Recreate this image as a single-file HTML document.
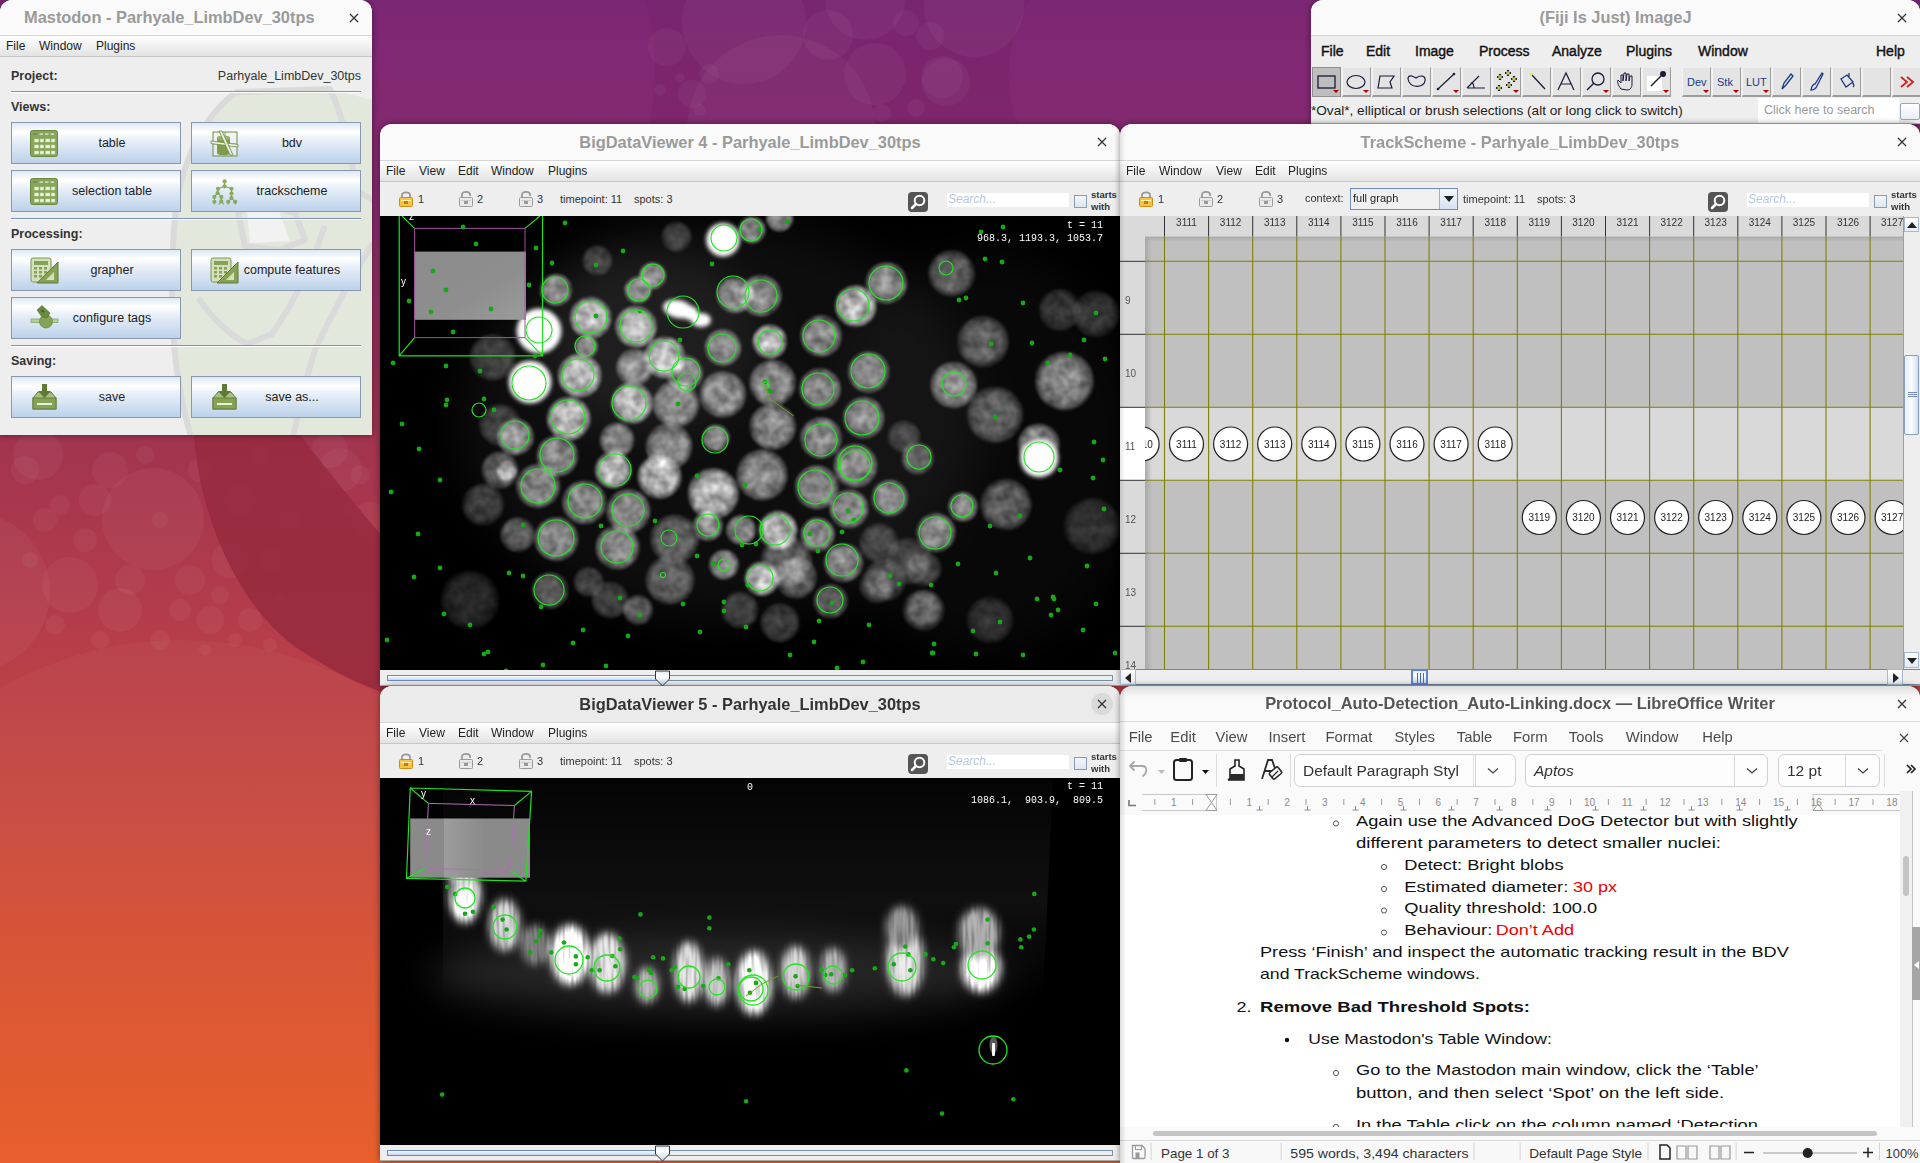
<!DOCTYPE html>
<html><head><meta charset="utf-8">
<style>
*{margin:0;padding:0;box-sizing:border-box}
html,body{width:1920px;height:1163px;overflow:hidden}
body{position:relative;font-family:"Liberation Sans",sans-serif;background:linear-gradient(180deg,#7c2774 0%,#872a6e 16%,#a2344f 38%,#b53d4a 54%,#c64840 68%,#d9522f 84%,#e75a26 100%)}
.abs{position:absolute}
.win{position:absolute;overflow:hidden;border-radius:12px 12px 0 0;background:#eeeeee;box-shadow:0 0 6px rgba(0,0,0,.45)}
.tb{position:absolute;left:0;right:0;top:0;background:#fafafa;border-bottom:1px solid #d6d6d6}
.tt{position:absolute;left:0;right:0;text-align:center;font-weight:bold;color:#9a9a9a;font-size:17px;white-space:nowrap}
.cls{position:absolute;font-size:17px;color:#333;width:24px;height:24px;line-height:24px;text-align:center}
.mb{position:absolute;left:0;right:0;background:linear-gradient(#ffffff,#e3e3e3);border-bottom:1px solid #c6c6c6;font-size:12px;color:#222}
.mb span{position:absolute;top:0}
.t{position:absolute;white-space:nowrap}
.btn{position:absolute;width:170px;height:42px;border:1px solid #8898b0;background:linear-gradient(#dde8f4 0%,#ffffff 22%,#e6eef8 45%,#bcd2ea 100%);font-size:12.5px;color:#222}
.btn .l{position:absolute;left:32px;right:0;top:13px;text-align:center}
.sep{position:absolute;left:11px;width:350px;height:2px;background:#7b8fcc;border-bottom:1px solid #fff}
.blbl{position:absolute;left:11px;font-weight:bold;font-size:12.5px;color:#333}
</style></head><body>

<!-- desktop decorations -->
<svg class="abs" style="left:0;top:0" width="1920" height="1163">
  <path d="M644,0 C660,40 655,90 650,123 L1018,123 C1000,80 1010,30 1030,0 Z" fill="#5a1050" fill-opacity="0.10"/>
  <g fill="#ffffff" fill-opacity="0.04">
    <circle cx="744" cy="22" r="62"/><circle cx="781" cy="129" r="94"/><circle cx="828" cy="35" r="25"/><circle cx="875" cy="74" r="31"/>
    <circle cx="946" cy="82" r="24"/><circle cx="865" cy="0" r="40"/><circle cx="974" cy="7" r="50"/><circle cx="667" cy="47" r="19"/><circle cx="692" cy="94" r="14"/><circle cx="709" cy="74" r="10"/><circle cx="906" cy="23" r="13"/><circle cx="930" cy="36" r="14"/><circle cx="942" cy="77" r="21"/><circle cx="916" cy="108" r="9"/><circle cx="882" cy="113" r="9"/><circle cx="660" cy="90" r="6"/><circle cx="680" cy="78" r="5"/><circle cx="700" cy="110" r="6"/>
  </g>
    <g fill="#ffffff" fill-opacity="0.045">
    <circle cx="-30" cy="592" r="80"/><circle cx="153" cy="519" r="51"/><circle cx="38" cy="455" r="25"/><circle cx="95" cy="500" r="16"/>
    <circle cx="70" cy="585" r="28"/><circle cx="120" cy="610" r="22"/><circle cx="190" cy="580" r="15"/><circle cx="230" cy="560" r="18"/>
    <circle cx="45" cy="520" r="12"/><circle cx="210" cy="620" r="14"/><circle cx="160" cy="640" r="10"/><circle cx="340" cy="470" r="22"/><circle cx="370" cy="520" r="18"/><circle cx="25" cy="470" r="14"/><circle cx="60" cy="505" r="10"/><circle cx="110" cy="470" r="18"/><circle cx="145" cy="455" r="9"/><circle cx="200" cy="470" r="12"/><circle cx="240" cy="500" r="16"/><circle cx="260" cy="455" r="10"/><circle cx="85" cy="540" r="12"/><circle cx="130" cy="580" r="15"/><circle cx="180" cy="610" r="11"/><circle cx="220" cy="595" r="9"/><circle cx="250" cy="620" r="12"/><circle cx="280" cy="600" r="8"/><circle cx="100" cy="640" r="9"/><circle cx="55" cy="625" r="10"/><circle cx="30" cy="560" r="8"/><circle cx="160" cy="520" r="8"/><circle cx="290" cy="520" r="10"/><circle cx="270" cy="560" r="12"/><circle cx="235" cy="640" r="7"/><circle cx="205" cy="650" r="6"/><circle cx="270" cy="645" r="7"/><circle cx="330" cy="450" r="18"/><circle cx="360" cy="475" r="10"/><circle cx="350" cy="510" r="8"/>
  </g>
  <path d="M194,435 C200,520 240,610 300,650 C330,670 360,685 390,695 L390,545 C350,500 320,460 300,435 Z" fill="#962a3e" fill-opacity="0.85"/>
  <path d="M0,688 C60,655 120,640 179,640 C260,640 330,665 390,701 L390,1163 L0,1163 Z" fill="#ffffff" fill-opacity="0.03"/>
</svg>

<!-- ===== Mastodon window ===== -->
<div class="win" id="mast" style="left:0;top:0;width:372px;height:435px;">
  <div class="tb" style="height:36px"><div class="tt" style="top:8px;left:24px;right:auto;font-size:16.4px">Mastodon - Parhyale_LimbDev_30tps</div><svg class="abs" style="left:349px;top:13px" width="10" height="10"><path d="M1,1 L9,9 M9,1 L1,9" stroke="#333" stroke-width="1.3"/></svg></div>
  <div class="mb" style="top:36px;height:21px"><span style="left:6px;top:3px">File</span><span style="left:39px;top:3px">Window</span><span style="left:96px;top:3px">Plugins</span></div>
  <svg class="abs" style="left:0;top:57px" width="372" height="378" viewBox="0 57 372 378">
    <path d="M237,92 L330,89 L372,100 L372,435 L192,435 C178,380 168,300 176,205 C185,150 210,110 237,92 Z" fill="#e3e8dc"/>
    <path d="M247,211 L279,211 L290,241 L250,243 Z" fill="#f2f2f2"/>
    <g fill="none" stroke="#dadada" stroke-width="6" stroke-linejoin="round" stroke-linecap="round">
      <path d="M237,92 C210,110 185,150 176,205 C168,290 170,370 192,440"/>
      <path d="M237,92 L330,89 C345,120 352,160 356,190 L372,200"/>
      <path d="M238,212 L262,203 L295,213 L305,240 L280,250 L245,246 Z"/>
      <path d="M324,228 C310,270 295,300 272,334 L247,344"/>
      <path d="M372,245 C350,280 330,318 315,350 C305,380 300,410 292,440"/>
      <path d="M200,300 C220,330 240,340 247,344"/>
    </g>
  </svg>
  <div class="blbl" style="top:69px">Project:</div>
  <div class="t" style="right:11px;top:69px;font-size:12.5px;color:#333">Parhyale_LimbDev_30tps</div>
  <div class="sep" style="top:91px"></div>
  <div class="blbl" style="top:100px">Views:</div>
  <div class="btn" style="left:11px;top:122px"><svg class="abs" style="left:18px;top:6px" width="30" height="29"><rect x="0.5" y="1.5" width="27" height="26" rx="2" fill="#86a45a" stroke="#6a8840"/><rect x="3" y="4" width="4" height="2" fill="#74914a"/><rect x="9.5" y="4.5" width="3.4" height="1.3" fill="#e4ecd4"/><rect x="15.1" y="4.5" width="3.4" height="1.3" fill="#e4ecd4"/><rect x="20.7" y="4.5" width="3.4" height="1.3" fill="#e4ecd4"/><rect x="4.5" y="10" width="4.2" height="3" fill="#eef4e0" stroke="#c8d8b0" stroke-width="0.5"/><rect x="10.1" y="10" width="3.6" height="3" fill="#eef4e0" stroke="#c8d8b0" stroke-width="0.5"/><rect x="15.7" y="10" width="4.2" height="3" fill="#eef4e0" stroke="#c8d8b0" stroke-width="0.5"/><rect x="21.3" y="10" width="3.6" height="3" fill="#eef4e0" stroke="#c8d8b0" stroke-width="0.5"/><rect x="4.5" y="16" width="4.2" height="3" fill="#eef4e0" stroke="#c8d8b0" stroke-width="0.5"/><rect x="10.1" y="16" width="3.6" height="3" fill="#eef4e0" stroke="#c8d8b0" stroke-width="0.5"/><rect x="15.7" y="16" width="4.2" height="3" fill="#eef4e0" stroke="#c8d8b0" stroke-width="0.5"/><rect x="21.3" y="16" width="3.6" height="3" fill="#eef4e0" stroke="#c8d8b0" stroke-width="0.5"/><rect x="4.5" y="22" width="4.2" height="3" fill="#eef4e0" stroke="#c8d8b0" stroke-width="0.5"/><rect x="10.1" y="22" width="3.6" height="3" fill="#eef4e0" stroke="#c8d8b0" stroke-width="0.5"/><rect x="15.7" y="22" width="4.2" height="3" fill="#eef4e0" stroke="#c8d8b0" stroke-width="0.5"/><rect x="21.3" y="22" width="3.6" height="3" fill="#eef4e0" stroke="#c8d8b0" stroke-width="0.5"/></svg><div class="l">table</div></div>
  <div class="btn" style="left:191px;top:122px"><svg class="abs" style="left:18px;top:6px" width="30" height="29"><rect x="3" y="3" width="24" height="24" fill="#f0f0ec" fill-opacity="0.6" stroke="#6f8c42" stroke-width="1"/><path d="M3,15 H27 M15,3 V27" stroke="#8aa660" stroke-width="1"/><path d="M7,9 C7,6 20,6 20,9 L20,24 C20,27 7,27 7,24 Z" fill="#7d9c4e"/><ellipse cx="13.5" cy="9" rx="6.5" ry="2.5" fill="#98b46a"/><path d="M1,12 L28,15.5 L28,18 L1,14.5 Z" fill="#f4f8ec" stroke="#6f8c42" stroke-width="0.8"/><path d="M9,2 L12,2 L23,26 L20,26 Z" fill="#e8f0dc" stroke="#6f8c42" stroke-width="0.8"/></svg><div class="l">bdv</div></div>
  <div class="btn" style="left:11px;top:170px"><svg class="abs" style="left:18px;top:6px" width="30" height="29"><rect x="0.5" y="1.5" width="27" height="26" rx="2" fill="#86a45a" stroke="#6a8840"/><rect x="3" y="4" width="4" height="2" fill="#74914a"/><rect x="9.5" y="4.5" width="3.4" height="1.3" fill="#e4ecd4"/><rect x="15.1" y="4.5" width="3.4" height="1.3" fill="#e4ecd4"/><rect x="20.7" y="4.5" width="3.4" height="1.3" fill="#e4ecd4"/><rect x="4.5" y="10" width="4.2" height="3" fill="#eef4e0" stroke="#c8d8b0" stroke-width="0.5"/><rect x="10.1" y="10" width="3.6" height="3" fill="#eef4e0" stroke="#c8d8b0" stroke-width="0.5"/><rect x="15.7" y="10" width="4.2" height="3" fill="#eef4e0" stroke="#c8d8b0" stroke-width="0.5"/><rect x="21.3" y="10" width="3.6" height="3" fill="#eef4e0" stroke="#c8d8b0" stroke-width="0.5"/><rect x="4.5" y="16" width="4.2" height="3" fill="#eef4e0" stroke="#c8d8b0" stroke-width="0.5"/><rect x="10.1" y="16" width="3.6" height="3" fill="#eef4e0" stroke="#c8d8b0" stroke-width="0.5"/><rect x="15.7" y="16" width="4.2" height="3" fill="#eef4e0" stroke="#c8d8b0" stroke-width="0.5"/><rect x="21.3" y="16" width="3.6" height="3" fill="#eef4e0" stroke="#c8d8b0" stroke-width="0.5"/><rect x="4.5" y="22" width="4.2" height="3" fill="#eef4e0" stroke="#c8d8b0" stroke-width="0.5"/><rect x="10.1" y="22" width="3.6" height="3" fill="#eef4e0" stroke="#c8d8b0" stroke-width="0.5"/><rect x="15.7" y="22" width="4.2" height="3" fill="#eef4e0" stroke="#c8d8b0" stroke-width="0.5"/><rect x="21.3" y="22" width="3.6" height="3" fill="#eef4e0" stroke="#c8d8b0" stroke-width="0.5"/></svg><div class="l">selection table</div></div>
  <div class="btn" style="left:191px;top:170px"><svg class="abs" style="left:18px;top:6px" width="30" height="29"><g stroke="#88a65a" stroke-width="1.1"><line x1="14.6" y1="4.4" x2="14.6" y2="9.3"/><line x1="14.6" y1="9.3" x2="8" y2="11.8"/><line x1="14.6" y1="9.3" x2="21.5" y2="11.8"/><line x1="8" y1="11.8" x2="7.6" y2="16.2"/><line x1="21.5" y1="11.8" x2="21.5" y2="16.6"/><line x1="7.6" y1="16.2" x2="4.4" y2="19.9"/><line x1="7.6" y1="16.2" x2="11.3" y2="19.9"/><line x1="21.5" y1="16.6" x2="21.5" y2="21.1"/><line x1="4.4" y1="19.9" x2="4.4" y2="24.8"/><line x1="11.3" y1="19.9" x2="11.3" y2="24.4"/><line x1="21.5" y1="21.1" x2="18.2" y2="24.8"/><line x1="21.5" y1="21.1" x2="25.2" y2="24.8"/><path d="M4.4,24.8 L4.4,27.5 M11.3,24.4 L8.5,27.5 M11.3,24.4 L14,27.5 M18.2,24.8 L18.2,27.5 M25.2,24.8 L25.2,27.5"/></g><g fill="#8aaa5c"><circle cx="14.6" cy="4.4" r="2.1"/><circle cx="14.6" cy="9.3" r="2.1"/><circle cx="8" cy="11.8" r="2.1"/><circle cx="21.5" cy="11.8" r="2.1"/><circle cx="7.6" cy="16.2" r="2.1"/><circle cx="21.5" cy="16.6" r="2.1"/><circle cx="4.4" cy="19.9" r="2.1"/><circle cx="11.3" cy="19.9" r="2.1"/><circle cx="21.5" cy="21.1" r="2.1"/><circle cx="4.4" cy="24.8" r="2.1"/><circle cx="11.3" cy="24.4" r="2.1"/><circle cx="18.2" cy="24.8" r="2.1"/><circle cx="25.2" cy="24.8" r="2.1"/></g></svg><div class="l">trackscheme</div></div>
  <div class="sep" style="top:218px"></div>
  <div class="blbl" style="top:227px">Processing:</div>
  <div class="btn" style="left:11px;top:249px"><svg class="abs" style="left:18px;top:6px" width="30" height="29"><rect x="1" y="2" width="20" height="24" rx="2" fill="#d4e0bc" stroke="#7a964e"/><rect x="4" y="5" width="14" height="4" fill="#86a256"/><g fill="#86a256"><rect x="4" y="11" width="3" height="2.5"/><rect x="9" y="11" width="3" height="2.5"/><rect x="14" y="11" width="3" height="2.5"/><rect x="4" y="15" width="3" height="2.5"/><rect x="9" y="15" width="3" height="2.5"/><rect x="14" y="15" width="3" height="2.5"/><rect x="4" y="19" width="3" height="2.5"/><rect x="9" y="19" width="3" height="2.5"/><rect x="14" y="19" width="3" height="2.5"/></g><path d="M28,6 L28,27 L7,27 Z" fill="#86a256" stroke="#5e7a36"/><path d="M24,16 L24,24 L16,24 Z" fill="#d4e0bc"/></svg><div class="l">grapher</div></div>
  <div class="btn" style="left:191px;top:249px"><svg class="abs" style="left:18px;top:6px" width="30" height="29"><rect x="1" y="2" width="20" height="24" rx="2" fill="#d4e0bc" stroke="#7a964e"/><rect x="4" y="5" width="14" height="4" fill="#86a256"/><g fill="#86a256"><rect x="4" y="11" width="3" height="2.5"/><rect x="9" y="11" width="3" height="2.5"/><rect x="14" y="11" width="3" height="2.5"/><rect x="4" y="15" width="3" height="2.5"/><rect x="9" y="15" width="3" height="2.5"/><rect x="14" y="15" width="3" height="2.5"/><rect x="4" y="19" width="3" height="2.5"/><rect x="9" y="19" width="3" height="2.5"/><rect x="14" y="19" width="3" height="2.5"/></g><path d="M28,6 L28,27 L7,27 Z" fill="#86a256" stroke="#5e7a36"/><path d="M24,16 L24,24 L16,24 Z" fill="#d4e0bc"/></svg><div class="l">compute features</div></div>
  <div class="btn" style="left:11px;top:297px"><svg class="abs" style="left:18px;top:6px" width="30" height="29"><rect x="1" y="15" width="27" height="3.5" fill="#b8cc98" stroke="#88a468" stroke-width="0.8"/><circle cx="16" cy="17.5" r="6.5" fill="#86a256" stroke="#6a8840" stroke-width="0.8"/><path d="M7,6 L12,1.5 L20,9 L17,14 L12,13 Z" fill="#6a8a3e" stroke="#56722e" stroke-width="0.6"/><rect x="11" y="6" width="3.5" height="2" transform="rotate(40 12.7 7)" fill="#4a6428"/></svg><div class="l">configure tags</div></div>
  <div class="sep" style="top:345px"></div>
  <div class="blbl" style="top:354px">Saving:</div>
  <div class="btn" style="left:11px;top:376px"><svg class="abs" style="left:18px;top:6px" width="30" height="29"><path d="M3,15 L8,9 L21,9 L26,15 L26,26 L3,26 Z" fill="#a8bf80" stroke="#64803a"/><rect x="3" y="15" width="23" height="11" fill="#86a256" stroke="#64803a"/><rect x="7" y="20" width="15" height="2" fill="#e8f0d8"/><path d="M12,1 L17,1 L17,8 L21,8 L14.5,15 L8,8 L12,8 Z" fill="#5e7a36"/></svg><div class="l">save</div></div>
  <div class="btn" style="left:191px;top:376px"><svg class="abs" style="left:18px;top:6px" width="30" height="29"><path d="M3,15 L8,9 L21,9 L26,15 L26,26 L3,26 Z" fill="#a8bf80" stroke="#64803a"/><rect x="3" y="15" width="23" height="11" fill="#86a256" stroke="#64803a"/><rect x="7" y="20" width="15" height="2" fill="#e8f0d8"/><path d="M12,1 L17,1 L17,8 L21,8 L14.5,15 L8,8 L12,8 Z" fill="#5e7a36"/>AS</svg><div class="l">save as...</div></div>
</div>


<!-- ===== ImageJ window ===== -->
<div class="win" style="left:1311px;top:0;width:609px;height:124px;background:#eeeeee;border-bottom:1px solid #b4b4b4">
  <div class="tb" style="height:36px"><div class="tt" style="top:8px;left:0;font-size:16.4px">(Fiji Is Just) ImageJ</div><svg class="abs" style="left:586px;top:13px" width="10" height="10"><path d="M1,1 L9,9 M9,1 L1,9" stroke="#333" stroke-width="1.3"/></svg></div>
  <div class="abs" style="left:0;top:36px;width:609px;height:29px;background:#eeeeee;font-size:14px;color:#111;-webkit-text-stroke:0.4px #111">
    <span class="t" style="left:10px;top:7px">File</span><span class="t" style="left:55px;top:7px">Edit</span><span class="t" style="left:104px;top:7px">Image</span><span class="t" style="left:168px;top:7px">Process</span><span class="t" style="left:241px;top:7px">Analyze</span><span class="t" style="left:315px;top:7px">Plugins</span><span class="t" style="left:387px;top:7px">Window</span><span class="t" style="left:565px;top:7px">Help</span>
  </div>
  <div class="abs" style="left:1px;top:67px;width:29px;height:30px;background:#bdbdbd;border:1px solid #909090"><svg class="abs" style="left:-1px;top:-1px" width="29" height="30"><rect x="6" y="9" width="17" height="12" fill="none" stroke="#1a1a3a" stroke-width="1.3"/><path d="M21,23 L27,23 L24,26 Z" fill="#b00000"/></svg></div><div class="abs" style="left:31px;top:67px;width:29px;height:30px;background:#e4e4e4;border-top:1px solid #eeeeee;border-left:1px solid #f4f4f4;border-right:1px solid #9c9c9c;border-bottom:2px solid #9c9c9c"><svg class="abs" style="left:-1px;top:-1px" width="29" height="30"><ellipse cx="14" cy="15" rx="9" ry="6.5" fill="none" stroke="#1a1a3a" stroke-width="1.2"/><path d="M21,23 L27,23 L24,26 Z" fill="#b00000"/></svg></div><div class="abs" style="left:61px;top:67px;width:29px;height:30px;background:#e4e4e4;border-top:1px solid #eeeeee;border-left:1px solid #f4f4f4;border-right:1px solid #9c9c9c;border-bottom:2px solid #9c9c9c"><svg class="abs" style="left:-1px;top:-1px" width="29" height="30"><path d="M6,21 L8,9 L22,9 L18,15 L20,21 Z" fill="none" stroke="#1a1a3a" stroke-width="1.2"/></svg></div><div class="abs" style="left:91px;top:67px;width:29px;height:30px;background:#e4e4e4;border-top:1px solid #eeeeee;border-left:1px solid #f4f4f4;border-right:1px solid #9c9c9c;border-bottom:2px solid #9c9c9c"><svg class="abs" style="left:-1px;top:-1px" width="29" height="30"><path d="M6,12 C6,7 11,9 14,11 C18,8 24,8 23,14 C22,21 8,22 6,12 Z" fill="none" stroke="#1a1a3a" stroke-width="1.2"/></svg></div><div class="abs" style="left:121px;top:67px;width:29px;height:30px;background:#e4e4e4;border-top:1px solid #eeeeee;border-left:1px solid #f4f4f4;border-right:1px solid #9c9c9c;border-bottom:2px solid #9c9c9c"><svg class="abs" style="left:-1px;top:-1px" width="29" height="30"><path d="M6,22 L22,7" stroke="#1a1a3a" stroke-width="1.2"/><circle cx="6" cy="22" r="1.3" fill="#1a1a3a"/><circle cx="22" cy="7" r="1.3" fill="#1a1a3a"/><path d="M21,23 L27,23 L24,26 Z" fill="#b00000"/></svg></div><div class="abs" style="left:151px;top:67px;width:29px;height:30px;background:#e4e4e4;border-top:1px solid #eeeeee;border-left:1px solid #f4f4f4;border-right:1px solid #9c9c9c;border-bottom:2px solid #9c9c9c"><svg class="abs" style="left:-1px;top:-1px" width="29" height="30"><path d="M5,21 L23,21 M5,21 L17,9 M12,21 C12,17 10,15 9,16" fill="none" stroke="#1a1a3a" stroke-width="1.2"/></svg></div><div class="abs" style="left:181px;top:67px;width:29px;height:30px;background:#e4e4e4;border-top:1px solid #eeeeee;border-left:1px solid #f4f4f4;border-right:1px solid #9c9c9c;border-bottom:2px solid #9c9c9c"><svg class="abs" style="left:-1px;top:-1px" width="29" height="30"><g stroke="#1a1a3a" stroke-width="2.2"><path d="M5,10 h6 M8,7 v6 M13,6 h6 M16,3 v6 M19,12 h6 M22,9 v6 M4,21 h6 M7,18 v6 M14,18 h6 M17,15 v6"/></g><g stroke="#ffff40" stroke-width="1"><path d="M6,10 h4 M8,8 v4 M14,6 h4 M16,4 v4 M20,12 h4 M22,10 v4 M5,21 h4 M7,19 v4 M15,18 h4 M17,16 v4"/></g><path d="M21,23 L27,23 L24,26 Z" fill="#b00000"/></svg></div><div class="abs" style="left:211px;top:67px;width:29px;height:30px;background:#e4e4e4;border-top:1px solid #eeeeee;border-left:1px solid #f4f4f4;border-right:1px solid #9c9c9c;border-bottom:2px solid #9c9c9c"><svg class="abs" style="left:-1px;top:-1px" width="29" height="30"><path d="M10,8 L23,22" stroke="#1a1a3a" stroke-width="1.3"/><circle cx="9" cy="7" r="1.6" fill="#ee3"/></svg></div><div class="abs" style="left:241px;top:67px;width:29px;height:30px;background:#e4e4e4;border-top:1px solid #eeeeee;border-left:1px solid #f4f4f4;border-right:1px solid #9c9c9c;border-bottom:2px solid #9c9c9c"><svg class="abs" style="left:-1px;top:-1px" width="29" height="30"><path d="M6,23 L14,6 L22,23 M9,17 L19,17" fill="none" stroke="#1a1a3a" stroke-width="1.2"/></svg></div><div class="abs" style="left:271px;top:67px;width:29px;height:30px;background:#e4e4e4;border-top:1px solid #eeeeee;border-left:1px solid #f4f4f4;border-right:1px solid #9c9c9c;border-bottom:2px solid #9c9c9c"><svg class="abs" style="left:-1px;top:-1px" width="29" height="30"><circle cx="16" cy="12" r="6" fill="none" stroke="#1a1a3a" stroke-width="1.3"/><path d="M12,16 L5,23" stroke="#1a1a3a" stroke-width="1.5"/><path d="M21,23 L27,23 L24,26 Z" fill="#b00000"/></svg></div><div class="abs" style="left:301px;top:67px;width:29px;height:30px;background:#e4e4e4;border-top:1px solid #eeeeee;border-left:1px solid #f4f4f4;border-right:1px solid #9c9c9c;border-bottom:2px solid #9c9c9c"><svg class="abs" style="left:-1px;top:-1px" width="29" height="30"><path d="M9,22 C6,18 5,15 6,13 L9,16 L9,8 L11,8 L11,14 L12,6 L14,6 L14,14 L15,7 L17,7 L17,14 L18,9 L20,9 L20,17 C20,21 18,23 15,23 Z" fill="none" stroke="#1a1a3a" stroke-width="1"/></svg></div><div class="abs" style="left:331px;top:67px;width:29px;height:30px;background:#e4e4e4;border-top:1px solid #eeeeee;border-left:1px solid #f4f4f4;border-right:1px solid #9c9c9c;border-bottom:2px solid #9c9c9c"><svg class="abs" style="left:-1px;top:-1px" width="29" height="30"><rect x="5" y="9" width="15" height="15" fill="#fff"/><path d="M9,19 L19,9" stroke="#1a1a3a" stroke-width="1.5"/><circle cx="21" cy="7" r="3" fill="#1a1a3a"/><path d="M21,23 L27,23 L24,26 Z" fill="#b00000"/></svg></div><div class="abs" style="left:371px;top:67px;width:29px;height:30px;background:#e4e4e4;border-top:1px solid #eeeeee;border-left:1px solid #f4f4f4;border-right:1px solid #9c9c9c;border-bottom:2px solid #9c9c9c"><svg class="abs" style="left:-1px;top:-1px" width="29" height="30"><text x="5" y="19" font-size="11" fill="#1a3a8a" font-family="Liberation Sans">Dev</text><path d="M21,23 L27,23 L24,26 Z" fill="#b00000"/></svg></div><div class="abs" style="left:401px;top:67px;width:29px;height:30px;background:#e4e4e4;border-top:1px solid #eeeeee;border-left:1px solid #f4f4f4;border-right:1px solid #9c9c9c;border-bottom:2px solid #9c9c9c"><svg class="abs" style="left:-1px;top:-1px" width="29" height="30"><text x="5" y="19" font-size="11" fill="#1a3a8a" font-family="Liberation Sans">Stk</text><path d="M21,23 L27,23 L24,26 Z" fill="#b00000"/></svg></div><div class="abs" style="left:431px;top:67px;width:29px;height:30px;background:#e4e4e4;border-top:1px solid #eeeeee;border-left:1px solid #f4f4f4;border-right:1px solid #9c9c9c;border-bottom:2px solid #9c9c9c"><svg class="abs" style="left:-1px;top:-1px" width="29" height="30"><text x="4" y="19" font-size="11" fill="#1a3a8a" font-family="Liberation Sans">LUT</text><path d="M21,23 L27,23 L24,26 Z" fill="#b00000"/></svg></div><div class="abs" style="left:461px;top:67px;width:29px;height:30px;background:#e4e4e4;border-top:1px solid #eeeeee;border-left:1px solid #f4f4f4;border-right:1px solid #9c9c9c;border-bottom:2px solid #9c9c9c"><svg class="abs" style="left:-1px;top:-1px" width="29" height="30"><path d="M10,22 L12,16 L19,7 L21,9 L14,18 Z" fill="none" stroke="#1a3a8a" stroke-width="1.3"/></svg></div><div class="abs" style="left:491px;top:67px;width:29px;height:30px;background:#e4e4e4;border-top:1px solid #eeeeee;border-left:1px solid #f4f4f4;border-right:1px solid #9c9c9c;border-bottom:2px solid #9c9c9c"><svg class="abs" style="left:-1px;top:-1px" width="29" height="30"><path d="M9,23 C10,18 12,17 13,17 L20,6 L21,7 L15,19 C14,21 12,23 9,23 Z" fill="none" stroke="#1a3a8a" stroke-width="1.3"/></svg></div><div class="abs" style="left:521px;top:67px;width:29px;height:30px;background:#e4e4e4;border-top:1px solid #eeeeee;border-left:1px solid #f4f4f4;border-right:1px solid #9c9c9c;border-bottom:2px solid #9c9c9c"><svg class="abs" style="left:-1px;top:-1px" width="29" height="30"><path d="M9,12 L15,8 L21,15 L14,20 Z M17,10 L17,6 M20,15 C22,17 22,19 21,20" fill="none" stroke="#1a3a8a" stroke-width="1.3"/></svg></div><div class="abs" style="left:551px;top:67px;width:29px;height:30px;background:#e4e4e4;border-top:1px solid #eeeeee;border-left:1px solid #f4f4f4;border-right:1px solid #9c9c9c;border-bottom:2px solid #9c9c9c"><svg class="abs" style="left:-1px;top:-1px" width="29" height="30"></svg></div><div class="abs" style="left:581px;top:67px;width:29px;height:30px;background:#e4e4e4;border-top:1px solid #eeeeee;border-left:1px solid #f4f4f4;border-right:1px solid #9c9c9c;border-bottom:2px solid #9c9c9c"><svg class="abs" style="left:-1px;top:-1px" width="29" height="30"><path d="M9,10 L15,15 L9,20 M15,10 L21,15 L15,20" fill="none" stroke="#d02020" stroke-width="1.8"/></svg></div>
  <div class="t" style="left:0;top:103px;font-size:13.6px;color:#222">*Oval*, elliptical or brush selections (alt or long click to switch)</div>
  <div class="abs" style="left:447px;top:98px;width:141px;height:25px;background:#fff"><span class="t" style="left:6px;top:5px;font-size:12.5px;color:#999">Click here to search</span></div>
  <div class="abs" style="left:589px;top:103px;width:20px;height:17px;border:1px solid #9aa6b8;background:linear-gradient(#fff,#e8eef6);border-radius:2px"></div>
</div>


<div class="win" style="left:380px;top:124px;width:740px;height:562px;background:#eeeeee">
  <div class="tb" style="height:37px;background:#fafafa"><div class="tt" style="top:9px;font-size:16.4px;color:#9a9a9a">BigDataViewer 4 - Parhyale_LimbDev_30tps</div><svg class="abs" style="left:717px;top:13px" width="10" height="10"><path d="M1,1 L9,9 M9,1 L1,9" stroke="#333" stroke-width="1.3"/></svg></div>
  <div class="mb" style="top:37px;height:21px"><span style="left:6px;top:3px">File</span><span style="left:39px;top:3px">View</span><span style="left:78px;top:3px">Edit</span><span style="left:111px;top:3px">Window</span><span style="left:168px;top:3px">Plugins</span></div>
  <svg class="abs" style="left:18px;top:66px" width="16" height="18"><path d="M4,8 L4,5 C4,1.5 12,1.5 12,5 L12,8" fill="none" stroke="#999" stroke-width="1.8"/><rect x="1.5" y="7.5" width="13" height="9" rx="1" fill="#f5c542" stroke="#d08a18"/><rect x="3" y="10" width="10" height="1" fill="#fff6c0"/><rect x="6" y="11" width="4" height="3" fill="#c47a10"/></svg><span class="t" style="left:38px;top:69px;font-size:11px;color:#333">1</span>
  <svg class="abs" style="left:78px;top:66px" width="16" height="18"><path d="M4,8 L4,4.5 C4,1 12,1 12,4.5 L12,6" fill="none" stroke="#999" stroke-width="1.8"/><rect x="1.5" y="7.5" width="13" height="9" rx="1" fill="#eaeaea" stroke="#9a9a9a"/><rect x="6" y="11" width="4" height="3" fill="#999"/><rect x="3" y="10" width="10" height="1" fill="#ccc"/></svg><span class="t" style="left:97px;top:69px;font-size:11px;color:#333">2</span>
  <svg class="abs" style="left:138px;top:66px" width="16" height="18"><path d="M4,8 L4,4.5 C4,1 12,1 12,4.5 L12,6" fill="none" stroke="#999" stroke-width="1.8"/><rect x="1.5" y="7.5" width="13" height="9" rx="1" fill="#eaeaea" stroke="#9a9a9a"/><rect x="6" y="11" width="4" height="3" fill="#999"/><rect x="3" y="10" width="10" height="1" fill="#ccc"/></svg><span class="t" style="left:157px;top:69px;font-size:11px;color:#333">3</span>
  <span class="t" style="left:180px;top:69px;font-size:11px;color:#333">timepoint: 11</span>
  <span class="t" style="left:254px;top:69px;font-size:11px;color:#333">spots: 3</span>
  <div class="abs" style="left:528px;top:68px;width:20px;height:20px;border-radius:4px;background:#555"><svg class="abs" style="left:0;top:0" width="20" height="20"><circle cx="11.5" cy="8.5" r="4.8" fill="none" stroke="#fff" stroke-width="2"/><path d="M8,12 L4,16" stroke="#fff" stroke-width="2.5" stroke-linecap="round"/></svg></div>
<div class="abs" style="left:567px;top:69px;width:122px;height:14px;background:#fff"><span class="t" style="left:1px;top:-1px;font-size:12px;font-style:italic;color:#b4c6e2">Search...</span></div>
<div class="abs" style="left:694px;top:71px;width:13px;height:13px;border:1px solid #8a9ab0;background:linear-gradient(#f4f7fb,#dde6f0)"></div>
<div class="t" style="left:711px;top:65px;font-size:9.5px;line-height:11.5px;color:#333;font-weight:bold">starts<br>with</div>
  <div class="abs" style="left:0;top:92px;width:740px;height:454px;background:#000;overflow:hidden"><svg width="740" height="454" style="position:absolute;left:0;top:0"><defs><filter id="b4" x="-10%" y="-10%" width="120%" height="120%"><feGaussianBlur in="SourceGraphic" stdDeviation="1.3" result="bl"/><feTurbulence type="fractalNoise" baseFrequency="0.09" numOctaves="2" seed="7" result="n"/><feColorMatrix in="n" type="matrix" values="0 0 0 0 1  0 0 0 0 1  0 0 0 0 1  0.9 0 0 0 0.25" result="nm"/><feComposite in="bl" in2="nm" operator="arithmetic" k1="1.1" k2="0.22" k3="0" k4="0"/></filter><filter id="b4g" x="-50%" y="-50%" width="200%" height="200%"><feGaussianBlur stdDeviation="22"/></filter><radialGradient id="nuc"><stop offset="0" stop-color="#fff" stop-opacity="1"/><stop offset="0.7" stop-color="#fff" stop-opacity="0.88"/><stop offset="0.9" stop-color="#fff" stop-opacity="0.45"/><stop offset="1" stop-color="#fff" stop-opacity="0"/></radialGradient></defs><rect width="740" height="454" fill="#000"/><g filter="url(#b4g)" fill="#fff"><ellipse cx="340" cy="204" rx="260" ry="200" fill-opacity="0.05"/><ellipse cx="270" cy="124" rx="110" ry="90" fill-opacity="0.07"/><ellipse cx="600" cy="234" rx="160" ry="200" fill-opacity="0.03"/></g><g filter="url(#b4)"><circle cx="176.0" cy="74.0" r="17.1" fill="url(#nuc)" opacity="0.54"/><circle cx="210.6" cy="101.8" r="22.0" fill="url(#nuc)" opacity="0.73"/><circle cx="206.6" cy="131.0" r="12.2" fill="url(#nuc)" opacity="0.54"/><circle cx="199.7" cy="159.6" r="23.2" fill="url(#nuc)" opacity="0.73"/><circle cx="188.8" cy="202.7" r="23.2" fill="url(#nuc)" opacity="0.73"/><circle cx="135.5" cy="221.0" r="19.5" fill="url(#nuc)" opacity="0.54"/><circle cx="256.0" cy="110.7" r="22.0" fill="url(#nuc)" opacity="0.73"/><circle cx="258.0" cy="74.0" r="14.6" fill="url(#nuc)" opacity="0.54"/><circle cx="272.5" cy="60.0" r="14.6" fill="url(#nuc)" opacity="0.54"/><circle cx="252.0" cy="187.0" r="22.0" fill="url(#nuc)" opacity="0.73"/><circle cx="237.0" cy="224.0" r="18.3" fill="url(#nuc)" opacity="0.54"/><circle cx="284.7" cy="141.4" r="22.0" fill="url(#nuc)" opacity="0.73"/><circle cx="304.5" cy="157.0" r="19.5" fill="url(#nuc)" opacity="0.54"/><circle cx="343.0" cy="131.5" r="19.5" fill="url(#nuc)" opacity="0.54"/><circle cx="355.0" cy="79.0" r="19.5" fill="url(#nuc)" opacity="0.54"/><circle cx="336.0" cy="222.0" r="14.6" fill="url(#nuc)" opacity="0.54"/><circle cx="372.0" cy="14.0" r="14.6" fill="url(#nuc)" opacity="0.54"/><circle cx="399.7" cy="2.0" r="14.6" fill="url(#nuc)" opacity="0.54"/><circle cx="217.5" cy="44.5" r="15.9" fill="url(#nuc)" opacity="0.24"/><circle cx="296.6" cy="20.7" r="15.9" fill="url(#nuc)" opacity="0.24"/><circle cx="112.7" cy="141.4" r="24.4" fill="url(#nuc)" opacity="0.24"/><circle cx="120.0" cy="209.0" r="22.0" fill="url(#nuc)" opacity="0.24"/><circle cx="380.9" cy="79.7" r="22.0" fill="url(#nuc)" opacity="0.54"/><circle cx="389.8" cy="125.6" r="18.3" fill="url(#nuc)" opacity="0.73"/><circle cx="475.8" cy="90.0" r="22.0" fill="url(#nuc)" opacity="0.73"/><circle cx="506.4" cy="67.0" r="22.0" fill="url(#nuc)" opacity="0.54"/><circle cx="441.0" cy="120.0" r="22.0" fill="url(#nuc)" opacity="0.54"/><circle cx="488.6" cy="156.0" r="22.0" fill="url(#nuc)" opacity="0.54"/><circle cx="440.0" cy="173.0" r="22.0" fill="url(#nuc)" opacity="0.54"/><circle cx="483.7" cy="201.7" r="22.0" fill="url(#nuc)" opacity="0.54"/><circle cx="441.0" cy="222.0" r="22.0" fill="url(#nuc)" opacity="0.54"/><circle cx="392.7" cy="167.0" r="24.4" fill="url(#nuc)" opacity="0.54"/><circle cx="392.7" cy="210.6" r="24.4" fill="url(#nuc)" opacity="0.54"/><circle cx="571.7" cy="57.3" r="24.4" fill="url(#nuc)" opacity="0.37"/><circle cx="603.0" cy="125.6" r="26.8" fill="url(#nuc)" opacity="0.37"/><circle cx="573.7" cy="169.0" r="24.4" fill="url(#nuc)" opacity="0.54"/><circle cx="615.0" cy="198.7" r="29.3" fill="url(#nuc)" opacity="0.37"/><circle cx="684.4" cy="165.0" r="30.5" fill="url(#nuc)" opacity="0.54"/><circle cx="716.0" cy="98.0" r="24.4" fill="url(#nuc)" opacity="0.20"/><circle cx="658.7" cy="228.4" r="22.0" fill="url(#nuc)" opacity="0.54"/><circle cx="524.0" cy="220.5" r="17.1" fill="url(#nuc)" opacity="0.24"/><circle cx="177.4" cy="240.0" r="22.0" fill="url(#nuc)" opacity="0.54"/><circle cx="233.3" cy="254.0" r="19.5" fill="url(#nuc)" opacity="0.73"/><circle cx="279.5" cy="260.6" r="23.2" fill="url(#nuc)" opacity="0.73"/><circle cx="289.0" cy="230.5" r="24.4" fill="url(#nuc)" opacity="0.54"/><circle cx="158.0" cy="270.0" r="23.2" fill="url(#nuc)" opacity="0.54"/><circle cx="204.3" cy="286.4" r="23.2" fill="url(#nuc)" opacity="0.54"/><circle cx="248.3" cy="295.0" r="23.2" fill="url(#nuc)" opacity="0.54"/><circle cx="333.3" cy="277.7" r="26.8" fill="url(#nuc)" opacity="0.73"/><circle cx="327.9" cy="310.0" r="15.9" fill="url(#nuc)" opacity="0.54"/><circle cx="294.6" cy="323.0" r="25.6" fill="url(#nuc)" opacity="0.37"/><circle cx="176.3" cy="323.0" r="23.2" fill="url(#nuc)" opacity="0.54"/><circle cx="237.6" cy="331.5" r="23.2" fill="url(#nuc)" opacity="0.54"/><circle cx="137.6" cy="318.6" r="18.3" fill="url(#nuc)" opacity="0.37"/><circle cx="103.2" cy="288.5" r="22.0" fill="url(#nuc)" opacity="0.24"/><circle cx="169.9" cy="374.5" r="19.5" fill="url(#nuc)" opacity="0.37"/><circle cx="208.6" cy="366.0" r="15.9" fill="url(#nuc)" opacity="0.24"/><circle cx="290.0" cy="364.0" r="25.6" fill="url(#nuc)" opacity="0.37"/><circle cx="344.0" cy="348.7" r="15.9" fill="url(#nuc)" opacity="0.54"/><circle cx="258.0" cy="394.0" r="15.9" fill="url(#nuc)" opacity="0.37"/><circle cx="361.0" cy="314.0" r="15.9" fill="url(#nuc)" opacity="0.54"/><circle cx="126.9" cy="255.0" r="11.0" fill="url(#nuc)" opacity="0.54"/><circle cx="475.4" cy="249.8" r="23.2" fill="url(#nuc)" opacity="0.54"/><circle cx="436.7" cy="271.3" r="23.2" fill="url(#nuc)" opacity="0.54"/><circle cx="469.0" cy="292.8" r="20.7" fill="url(#nuc)" opacity="0.54"/><circle cx="509.8" cy="282.0" r="19.5" fill="url(#nuc)" opacity="0.54"/><circle cx="537.7" cy="242.3" r="17.1" fill="url(#nuc)" opacity="0.37"/><circle cx="582.9" cy="290.7" r="15.9" fill="url(#nuc)" opacity="0.54"/><circle cx="625.9" cy="288.5" r="26.8" fill="url(#nuc)" opacity="0.37"/><circle cx="556.0" cy="316.5" r="20.7" fill="url(#nuc)" opacity="0.54"/><circle cx="398.0" cy="314.3" r="20.7" fill="url(#nuc)" opacity="0.73"/><circle cx="437.7" cy="318.6" r="18.3" fill="url(#nuc)" opacity="0.54"/><circle cx="381.8" cy="362.7" r="18.3" fill="url(#nuc)" opacity="0.73"/><circle cx="416.2" cy="361.6" r="22.0" fill="url(#nuc)" opacity="0.37"/><circle cx="463.5" cy="346.6" r="20.7" fill="url(#nuc)" opacity="0.54"/><circle cx="450.6" cy="385.3" r="18.3" fill="url(#nuc)" opacity="0.37"/><circle cx="499.0" cy="327.0" r="20.7" fill="url(#nuc)" opacity="0.24"/><circle cx="496.9" cy="370.0" r="18.3" fill="url(#nuc)" opacity="0.24"/><circle cx="544.0" cy="353.0" r="18.3" fill="url(#nuc)" opacity="0.24"/><circle cx="544.0" cy="391.7" r="18.3" fill="url(#nuc)" opacity="0.24"/><circle cx="400.0" cy="406.8" r="20.7" fill="url(#nuc)" opacity="0.24"/><circle cx="711.9" cy="310.0" r="29.3" fill="url(#nuc)" opacity="0.18"/><circle cx="680.0" cy="94.0" r="22.0" fill="url(#nuc)" opacity="0.20"/><circle cx="90.0" cy="384.0" r="30.5" fill="url(#nuc)" opacity="0.16"/><circle cx="610.0" cy="404.0" r="24.4" fill="url(#nuc)" opacity="0.18"/><circle cx="382.0" cy="259.0" r="26.8" fill="url(#nuc)" opacity="0.54"/><circle cx="296.0" cy="188.0" r="24.4" fill="url(#nuc)" opacity="0.54"/><circle cx="254.6" cy="151.4" r="19.5" fill="url(#nuc)" opacity="0.54"/><circle cx="406.5" cy="345.0" r="26.8" fill="url(#nuc)" opacity="0.37"/><circle cx="529.0" cy="345.0" r="24.4" fill="url(#nuc)" opacity="0.24"/><circle cx="504.5" cy="364.5" r="22.0" fill="url(#nuc)" opacity="0.24"/><circle cx="543.6" cy="394.0" r="22.0" fill="url(#nuc)" opacity="0.24"/><circle cx="342.8" cy="178.4" r="24.4" fill="url(#nuc)" opacity="0.54"/><circle cx="360.0" cy="394.0" r="19.5" fill="url(#nuc)" opacity="0.24"/><circle cx="230.0" cy="384.0" r="19.5" fill="url(#nuc)" opacity="0.24"/><circle cx="120.0" cy="254.0" r="19.5" fill="url(#nuc)" opacity="0.37"/></g><filter id="b4s" x="-30%" y="-30%" width="160%" height="160%"><feGaussianBlur stdDeviation="2"/></filter><g filter="url(#b4s)"><circle cx="159.0" cy="115.0" r="22.4" fill="#fff"/><circle cx="150.0" cy="166.0" r="21.3" fill="#fff"/><circle cx="343.0" cy="23.7" r="16.8" fill="#fff"/><circle cx="659.2" cy="242.3" r="19.0" fill="#fff"/><ellipse cx="298" cy="93" rx="15" ry="9" transform="rotate(12 298 93)" fill="#fff"/><ellipse cx="321" cy="104" rx="10" ry="7" fill="#fff"/><ellipse cx="310" cy="97" rx="8" ry="7" fill="#fff"/></g><defs><linearGradient id="ovg" x1="0" y1="0" x2="1" y2="1"><stop offset="0" stop-color="#8c8c8c"/><stop offset="0.6" stop-color="#8e8e8e"/><stop offset="1" stop-color="#9c9c9c"/></linearGradient></defs><rect x="34" y="35.599999999999994" width="112" height="68.2" fill="url(#ovg)"/><path d="M34.60000000000002,12.400000000000006 H145 V121.60000000000002 H34.60000000000002 Z" fill="none" stroke="#a050a0" stroke-width="1"/><path d="M19.19999999999999,0 V139.8 H162.5 V0 M19.19999999999999,139.8 L34.60000000000002,121.60000000000002 M162.5,139.8 L145,121.60000000000002 M22,0 L34.60000000000002,12.400000000000006 M160,0 L145,12.400000000000006" fill="none" stroke="#20e020" stroke-width="1.2"/><text x="29" y="4" font-size="10" fill="#fff" font-family="Liberation Sans">z</text><text x="21" y="69" font-size="10" fill="#fff" font-family="Liberation Sans">y</text><g fill="#16a816"><circle cx="185" cy="7" r="2.4"/><circle cx="96" cy="28" r="2.4"/><circle cx="66" cy="74" r="2.4"/><circle cx="155" cy="140" r="2.4"/><circle cx="114" cy="194" r="2.4"/><circle cx="29" cy="85" r="2.4"/><circle cx="53" cy="55" r="2.4"/><circle cx="51" cy="96" r="2.4"/><circle cx="13" cy="147" r="2.4"/><circle cx="66" cy="150" r="2.4"/><circle cx="66" cy="189" r="2.4"/><circle cx="22" cy="208" r="2.4"/><circle cx="216" cy="49" r="2.4"/><circle cx="243" cy="35" r="2.4"/><circle cx="216" cy="100" r="2.4"/><circle cx="298" cy="188" r="2.4"/><circle cx="260" cy="95" r="2.4"/><circle cx="300" cy="124" r="2.4"/><circle cx="332" cy="48" r="2.4"/><circle cx="380" cy="13" r="2.4"/><circle cx="407" cy="6" r="2.4"/><circle cx="601" cy="16" r="2.4"/><circle cx="623" cy="11" r="2.4"/><circle cx="586" cy="82" r="2.4"/><circle cx="643" cy="87" r="2.4"/><circle cx="579" cy="84" r="2.4"/><circle cx="716" cy="97" r="2.4"/><circle cx="652" cy="127" r="2.4"/><circle cx="668" cy="147" r="2.4"/><circle cx="690" cy="139" r="2.4"/><circle cx="714" cy="226" r="2.4"/><circle cx="725" cy="143" r="2.4"/><circle cx="615" cy="201" r="2.4"/><circle cx="611" cy="128" r="2.4"/><circle cx="385" cy="166" r="2.4"/><circle cx="390" cy="175" r="2.4"/><circle cx="362" cy="329" r="2.4"/><circle cx="474" cy="304" r="2.4"/><circle cx="578" cy="348" r="2.4"/><circle cx="616" cy="357" r="2.4"/><circle cx="610" cy="310" r="2.4"/><circle cx="640" cy="300" r="2.4"/><circle cx="678" cy="394" r="2.4"/><circle cx="657" cy="383" r="2.4"/><circle cx="707" cy="350" r="2.4"/><circle cx="674" cy="383" r="2.4"/><circle cx="410" cy="439" r="2.4"/><circle cx="434" cy="426" r="2.4"/><circle cx="553" cy="437" r="2.4"/><circle cx="596" cy="438" r="2.4"/><circle cx="671" cy="399" r="2.4"/><circle cx="703" cy="414" r="2.4"/><circle cx="735" cy="437" r="2.4"/><circle cx="60" cy="352" r="2.4"/><circle cx="39" cy="233" r="2.4"/><circle cx="11" cy="276" r="2.4"/><circle cx="60" cy="264" r="2.4"/><circle cx="38" cy="318" r="2.4"/><circle cx="34" cy="361" r="2.4"/><circle cx="143" cy="309" r="2.4"/><circle cx="143" cy="360" r="2.4"/><circle cx="129" cy="357" r="2.4"/><circle cx="126" cy="455" r="2.4"/><circle cx="7" cy="424" r="2.4"/><circle cx="90" cy="409" r="2.4"/><circle cx="161" cy="391" r="2.4"/><circle cx="193" cy="427" r="2.4"/><circle cx="104" cy="438" r="2.4"/><circle cx="64" cy="398" r="2.4"/><circle cx="221" cy="310" r="2.4"/><circle cx="275" cy="305" r="2.4"/><circle cx="260" cy="399" r="2.4"/><circle cx="203" cy="414" r="2.4"/><circle cx="248" cy="420" r="2.4"/><circle cx="317" cy="340" r="2.4"/><circle cx="333" cy="348" r="2.4"/><circle cx="344" cy="395" r="2.4"/><circle cx="376" cy="328" r="2.4"/><circle cx="317" cy="260" r="2.4"/><circle cx="430" cy="318" r="2.4"/><circle cx="365" cy="269" r="2.4"/><circle cx="452" cy="387" r="2.4"/><circle cx="439" cy="405" r="2.4"/><circle cx="320" cy="416" r="2.4"/><circle cx="366" cy="411" r="2.4"/><circle cx="395" cy="474" r="2.4"/><circle cx="483" cy="446" r="2.4"/><circle cx="552" cy="437" r="2.4"/><circle cx="489" cy="409" r="2.4"/><circle cx="551" cy="369" r="2.4"/><circle cx="510" cy="360" r="2.4"/><circle cx="713" cy="262" r="2.4"/><circle cx="724" cy="293" r="2.4"/><circle cx="723" cy="244" r="2.4"/><circle cx="680" cy="254" r="2.4"/><circle cx="83" cy="11" r="2.4"/><circle cx="156" cy="32" r="2.4"/><circle cx="73" cy="116" r="2.4"/><circle cx="111" cy="93" r="2.4"/><circle cx="172" cy="47" r="2.4"/><circle cx="149" cy="69" r="2.4"/><circle cx="104" cy="183" r="2.4"/><circle cx="100" cy="155" r="2.4"/><circle cx="67" cy="184" r="2.4"/><circle cx="622" cy="46" r="2.4"/><circle cx="605" cy="43" r="2.4"/><circle cx="704" cy="124" r="2.4"/><circle cx="650" cy="342" r="2.4"/><circle cx="593" cy="415" r="2.4"/><circle cx="519" cy="368" r="2.4"/><circle cx="620" cy="406" r="2.4"/><circle cx="643" cy="439" r="2.4"/><circle cx="554" cy="428" r="2.4"/><circle cx="457" cy="452" r="2.4"/><circle cx="384" cy="464" r="2.4"/><circle cx="226" cy="450" r="2.4"/><circle cx="163" cy="449" r="2.4"/><circle cx="108" cy="436" r="2.4"/><circle cx="240" cy="382" r="2.4"/><circle cx="303" cy="388" r="2.4"/><circle cx="344" cy="386" r="2.4"/><circle cx="368" cy="369" r="2.4"/><circle cx="462" cy="316" r="2.4"/><circle cx="438" cy="335" r="2.4"/><circle cx="468" cy="295" r="2.4"/><circle cx="673" cy="381" r="2.4"/><circle cx="716" cy="388" r="2.4"/></g><g fill="none" stroke="#22e622" stroke-width="1.15"><circle cx="149" cy="167" r="17"/><circle cx="159" cy="114" r="13"/><circle cx="175" cy="74" r="13"/><circle cx="211" cy="101" r="16"/><circle cx="256" cy="110" r="16"/><circle cx="273" cy="59" r="11"/><circle cx="303" cy="96" r="16"/><circle cx="344" cy="22" r="13"/><circle cx="371" cy="14" r="11"/><circle cx="353" cy="76" r="16"/><circle cx="381" cy="80" r="16"/><circle cx="342" cy="132" r="14"/><circle cx="390" cy="126" r="12"/><circle cx="284" cy="140" r="15"/><circle cx="306" cy="156" r="14"/><circle cx="205" cy="130" r="10"/><circle cx="198" cy="159" r="16"/><circle cx="439" cy="120" r="16"/><circle cx="473" cy="89" r="16"/><circle cx="506" cy="67" r="17"/><circle cx="566" cy="52" r="7"/><circle cx="488" cy="155" r="17"/><circle cx="438" cy="173" r="16"/><circle cx="482" cy="202" r="17"/><circle cx="441" cy="224" r="16"/><circle cx="475" cy="247" r="17"/><circle cx="475" cy="250" r="15"/><circle cx="539" cy="241" r="12"/><circle cx="574" cy="168" r="12"/><circle cx="659" cy="241" r="15"/><circle cx="509" cy="282" r="15"/><circle cx="435" cy="271" r="17"/><circle cx="468" cy="292" r="15"/><circle cx="395" cy="314" r="15"/><circle cx="369" cy="314" r="14"/><circle cx="328" cy="309" r="11"/><circle cx="437" cy="317" r="13"/><circle cx="462" cy="344" r="16"/><circle cx="380" cy="362" r="13"/><circle cx="450" cy="384" r="13"/><circle cx="289" cy="322" r="8"/><circle cx="248" cy="294" r="16"/><circle cx="205" cy="285" r="17"/><circle cx="158" cy="270" r="17"/><circle cx="176" cy="322" r="18"/><circle cx="237" cy="331" r="16"/><circle cx="169" cy="374" r="15"/><circle cx="283" cy="359" r="2.5"/><circle cx="344" cy="349" r="6"/><circle cx="235" cy="254" r="16"/><circle cx="249" cy="187" r="17"/><circle cx="188" cy="201" r="17"/><circle cx="177" cy="239" r="17"/><circle cx="135" cy="219" r="14"/><circle cx="99" cy="194" r="7"/><circle cx="335" cy="224" r="13"/><circle cx="582" cy="290" r="11"/><circle cx="555" cy="317" r="16"/><circle cx="258.70000000000005" cy="74" r="11"/><circle cx="307" cy="166" r="9"/><circle cx="386" cy="169" r="3"/></g><path d="M386,169 L388,182 L397,188 L414,200" fill="none" stroke="#70a020" stroke-width="1"/><text x="723" y="12" font-size="10" fill="#fff" font-family="Liberation Mono" text-anchor="end">t = 11</text><text x="723" y="25" font-size="10" fill="#fff" font-family="Liberation Mono" text-anchor="end">968.3, 1193.3, 1053.7</text></svg></div>
  <div class="abs" style="left:0;top:561px;width:740px;height:1px;background:#a8a8a8"></div>
  <div class="abs" style="left:7px;top:551px;width:275px;height:6px;border:1px solid #6a88c8;border-right:none;background:linear-gradient(#fafcff,#c4d6ec)"></div>
  <div class="abs" style="left:282px;top:551px;width:451px;height:6px;border:1px solid #7890a8;border-left:none;background:#eeeeee"></div>
  <svg class="abs" style="left:274px;top:546px" width="17" height="17"><defs><linearGradient id="thg" x1="0" x2="0" y1="0" y2="1"><stop offset="0" stop-color="#dce8f6"/><stop offset="0.35" stop-color="#ffffff"/><stop offset="1" stop-color="#bcd2ec"/></linearGradient></defs><path d="M1.5,1 L15.5,1 L15.5,9 L8.5,16 L1.5,9 Z" fill="url(#thg)" stroke="#333" stroke-width="1"/></svg>
</div>
<div class="win" style="left:1120px;top:124px;width:800px;height:562px;background:#eeeeee">
<div class="tb" style="height:37px"><div class="tt" style="top:9px;font-size:16.4px">TrackScheme - Parhyale_LimbDev_30tps</div><svg class="abs" style="left:777px;top:13px" width="10" height="10"><path d="M1,1 L9,9 M9,1 L1,9" stroke="#333" stroke-width="1.3"/></svg></div>
<div class="mb" style="top:37px;height:21px"><span style="left:6px;top:3px">File</span><span style="left:39px;top:3px">Window</span><span style="left:96px;top:3px">View</span><span style="left:135px;top:3px">Edit</span><span style="left:168px;top:3px">Plugins</span></div>
<svg class="abs" style="left:18px;top:66px" width="16" height="18"><path d="M4,8 L4,5 C4,1.5 12,1.5 12,5 L12,8" fill="none" stroke="#999" stroke-width="1.8"/><rect x="1.5" y="7.5" width="13" height="9" rx="1" fill="#f5c542" stroke="#d08a18"/><rect x="3" y="10" width="10" height="1" fill="#fff6c0"/><rect x="6" y="11" width="4" height="3" fill="#c47a10"/></svg><span class="t" style="left:38px;top:69px;font-size:11px;color:#333">1</span>
<svg class="abs" style="left:78px;top:66px" width="16" height="18"><path d="M4,8 L4,4.5 C4,1 12,1 12,4.5 L12,6" fill="none" stroke="#999" stroke-width="1.8"/><rect x="1.5" y="7.5" width="13" height="9" rx="1" fill="#eaeaea" stroke="#9a9a9a"/><rect x="6" y="11" width="4" height="3" fill="#999"/><rect x="3" y="10" width="10" height="1" fill="#ccc"/></svg><span class="t" style="left:97px;top:69px;font-size:11px;color:#333">2</span>
<svg class="abs" style="left:138px;top:66px" width="16" height="18"><path d="M4,8 L4,4.5 C4,1 12,1 12,4.5 L12,6" fill="none" stroke="#999" stroke-width="1.8"/><rect x="1.5" y="7.5" width="13" height="9" rx="1" fill="#eaeaea" stroke="#9a9a9a"/><rect x="6" y="11" width="4" height="3" fill="#999"/><rect x="3" y="10" width="10" height="1" fill="#ccc"/></svg><span class="t" style="left:157px;top:69px;font-size:11px;color:#333">3</span>
<span class="t" style="left:185px;top:68px;font-size:11px;color:#333">context:</span>
<div class="abs" style="left:230px;top:64px;width:108px;height:22px;border:1px solid #6f8cc0;background:#f0f0f0"><span class="t" style="left:2px;top:3px;font-size:11px;color:#222">full graph</span><div class="abs" style="left:88px;top:0;width:18px;height:20px;border-left:1px solid #9ab0d0;background:linear-gradient(#f6f9fd,#d6e2f0)"><svg class="abs" style="left:3px;top:6px" width="12" height="8"><path d="M1,1 L11,1 L6,7 Z" fill="#222"/></svg></div></div>
<span class="t" style="left:343px;top:69px;font-size:11px;color:#333">timepoint: 11</span>
<span class="t" style="left:417px;top:69px;font-size:11px;color:#333">spots: 3</span>
<div class="abs" style="left:588px;top:68px;width:20px;height:20px;border-radius:4px;background:#555"><svg class="abs" style="left:0;top:0" width="20" height="20"><circle cx="11.5" cy="8.5" r="4.8" fill="none" stroke="#fff" stroke-width="2"/><path d="M8,12 L4,16" stroke="#fff" stroke-width="2.5" stroke-linecap="round"/></svg></div>
<div class="abs" style="left:627px;top:69px;width:122px;height:14px;background:#fff"><span class="t" style="left:1px;top:-1px;font-size:12px;font-style:italic;color:#b4c6e2">Search...</span></div>
<div class="abs" style="left:754px;top:71px;width:13px;height:13px;border:1px solid #8a9ab0;background:linear-gradient(#f4f7fb,#dde6f0)"></div>
<div class="t" style="left:771px;top:65px;font-size:9.5px;line-height:11.5px;color:#333;font-weight:bold">starts<br>with</div>
<svg class="abs" style="left:0;top:92px" width="783" height="453"><rect x="0" y="0" width="783" height="453" fill="#c0c0c0"/><rect x="25" y="191.3" width="760" height="73" fill="#d9d9d9"/><defs><linearGradient id="tsl" x1="0" x2="1"><stop offset="0" stop-color="#a8a8a8"/><stop offset="1" stop-color="#a8a8a8" stop-opacity="0"/></linearGradient><linearGradient id="tst" x1="0" x2="0" y1="0" y2="1"><stop offset="0" stop-color="#a8a8a8"/><stop offset="1" stop-color="#a8a8a8" stop-opacity="0"/></linearGradient></defs><rect x="25" y="20.5" width="7" height="434" fill="url(#tsl)"/><rect x="25" y="20.5" width="760" height="5" fill="url(#tst)"/><line x1="44.5" y1="20.5" x2="44.5" y2="453" stroke="#808000" stroke-width="1.1"/><line x1="88.6" y1="20.5" x2="88.6" y2="453" stroke="#808000" stroke-width="1.1"/><line x1="132.7" y1="20.5" x2="132.7" y2="453" stroke="#808000" stroke-width="1.1"/><line x1="176.8" y1="20.5" x2="176.8" y2="453" stroke="#808000" stroke-width="1.1"/><line x1="220.9" y1="20.5" x2="220.9" y2="453" stroke="#808000" stroke-width="1.1"/><line x1="265.0" y1="20.5" x2="265.0" y2="453" stroke="#808000" stroke-width="1.1"/><line x1="309.1" y1="20.5" x2="309.1" y2="453" stroke="#808000" stroke-width="1.1"/><line x1="353.2" y1="20.5" x2="353.2" y2="453" stroke="#808000" stroke-width="1.1"/><line x1="397.3" y1="20.5" x2="397.3" y2="453" stroke="#808000" stroke-width="1.1"/><line x1="441.4" y1="20.5" x2="441.4" y2="453" stroke="#808000" stroke-width="1.1"/><line x1="485.5" y1="20.5" x2="485.5" y2="453" stroke="#808000" stroke-width="1.1"/><line x1="529.6" y1="20.5" x2="529.6" y2="453" stroke="#808000" stroke-width="1.1"/><line x1="573.7" y1="20.5" x2="573.7" y2="453" stroke="#808000" stroke-width="1.1"/><line x1="617.8" y1="20.5" x2="617.8" y2="453" stroke="#808000" stroke-width="1.1"/><line x1="661.9" y1="20.5" x2="661.9" y2="453" stroke="#808000" stroke-width="1.1"/><line x1="706.0" y1="20.5" x2="706.0" y2="453" stroke="#808000" stroke-width="1.1"/><line x1="750.1" y1="20.5" x2="750.1" y2="453" stroke="#808000" stroke-width="1.1"/><line x1="25" y1="45.3" x2="783" y2="45.3" stroke="#808000" stroke-width="1.1"/><line x1="25" y1="118.3" x2="783" y2="118.3" stroke="#808000" stroke-width="1.1"/><line x1="25" y1="191.3" x2="783" y2="191.3" stroke="#808000" stroke-width="1.1"/><line x1="25" y1="264.3" x2="783" y2="264.3" stroke="#808000" stroke-width="1.1"/><line x1="25" y1="337.3" x2="783" y2="337.3" stroke="#808000" stroke-width="1.1"/><line x1="25" y1="410.3" x2="783" y2="410.3" stroke="#808000" stroke-width="1.1"/><circle cx="22.1" cy="228.0" r="17" fill="#fff" stroke="#222" stroke-width="1.2"/><text x="22.1" y="231.5" font-size="10" text-anchor="middle" fill="#222" font-family="Liberation Sans">3110</text><circle cx="66.5" cy="228.0" r="17" fill="#fff" stroke="#222" stroke-width="1.2"/><text x="66.5" y="231.5" font-size="10" text-anchor="middle" fill="#222" font-family="Liberation Sans">3111</text><circle cx="110.6" cy="228.0" r="17" fill="#fff" stroke="#222" stroke-width="1.2"/><text x="110.6" y="231.5" font-size="10" text-anchor="middle" fill="#222" font-family="Liberation Sans">3112</text><circle cx="154.7" cy="228.0" r="17" fill="#fff" stroke="#222" stroke-width="1.2"/><text x="154.7" y="231.5" font-size="10" text-anchor="middle" fill="#222" font-family="Liberation Sans">3113</text><circle cx="198.8" cy="228.0" r="17" fill="#fff" stroke="#222" stroke-width="1.2"/><text x="198.8" y="231.5" font-size="10" text-anchor="middle" fill="#222" font-family="Liberation Sans">3114</text><circle cx="242.9" cy="228.0" r="17" fill="#fff" stroke="#222" stroke-width="1.2"/><text x="242.9" y="231.5" font-size="10" text-anchor="middle" fill="#222" font-family="Liberation Sans">3115</text><circle cx="287.0" cy="228.0" r="17" fill="#fff" stroke="#222" stroke-width="1.2"/><text x="287.0" y="231.5" font-size="10" text-anchor="middle" fill="#222" font-family="Liberation Sans">3116</text><circle cx="331.1" cy="228.0" r="17" fill="#fff" stroke="#222" stroke-width="1.2"/><text x="331.1" y="231.5" font-size="10" text-anchor="middle" fill="#222" font-family="Liberation Sans">3117</text><circle cx="375.2" cy="228.0" r="17" fill="#fff" stroke="#222" stroke-width="1.2"/><text x="375.2" y="231.5" font-size="10" text-anchor="middle" fill="#222" font-family="Liberation Sans">3118</text><circle cx="419.3" cy="301.5" r="17" fill="#fff" stroke="#222" stroke-width="1.2"/><text x="419.3" y="305.0" font-size="10" text-anchor="middle" fill="#222" font-family="Liberation Sans">3119</text><circle cx="463.4" cy="301.5" r="17" fill="#fff" stroke="#222" stroke-width="1.2"/><text x="463.4" y="305.0" font-size="10" text-anchor="middle" fill="#222" font-family="Liberation Sans">3120</text><circle cx="507.5" cy="301.5" r="17" fill="#fff" stroke="#222" stroke-width="1.2"/><text x="507.5" y="305.0" font-size="10" text-anchor="middle" fill="#222" font-family="Liberation Sans">3121</text><circle cx="551.6" cy="301.5" r="17" fill="#fff" stroke="#222" stroke-width="1.2"/><text x="551.6" y="305.0" font-size="10" text-anchor="middle" fill="#222" font-family="Liberation Sans">3122</text><circle cx="595.7" cy="301.5" r="17" fill="#fff" stroke="#222" stroke-width="1.2"/><text x="595.7" y="305.0" font-size="10" text-anchor="middle" fill="#222" font-family="Liberation Sans">3123</text><circle cx="639.8" cy="301.5" r="17" fill="#fff" stroke="#222" stroke-width="1.2"/><text x="639.8" y="305.0" font-size="10" text-anchor="middle" fill="#222" font-family="Liberation Sans">3124</text><circle cx="683.9" cy="301.5" r="17" fill="#fff" stroke="#222" stroke-width="1.2"/><text x="683.9" y="305.0" font-size="10" text-anchor="middle" fill="#222" font-family="Liberation Sans">3125</text><circle cx="728.0" cy="301.5" r="17" fill="#fff" stroke="#222" stroke-width="1.2"/><text x="728.0" y="305.0" font-size="10" text-anchor="middle" fill="#222" font-family="Liberation Sans">3126</text><circle cx="772.1" cy="301.5" r="17" fill="#fff" stroke="#222" stroke-width="1.2"/><text x="772.1" y="305.0" font-size="10" text-anchor="middle" fill="#222" font-family="Liberation Sans">3127</text><rect x="0" y="0" width="25" height="454" fill="#dadada"/><rect x="0" y="191.3" width="25" height="73" fill="#ffffff"/><line x1="0" y1="45.3" x2="25" y2="45.3" stroke="#333" stroke-width="1"/><line x1="0" y1="118.3" x2="25" y2="118.3" stroke="#333" stroke-width="1"/><line x1="0" y1="191.3" x2="25" y2="191.3" stroke="#333" stroke-width="1"/><line x1="0" y1="264.3" x2="25" y2="264.3" stroke="#333" stroke-width="1"/><line x1="0" y1="337.3" x2="25" y2="337.3" stroke="#333" stroke-width="1"/><line x1="0" y1="410.3" x2="25" y2="410.3" stroke="#333" stroke-width="1"/><text x="5" y="88" font-size="10" fill="#555" font-family="Liberation Sans">9</text><text x="5" y="161" font-size="10" fill="#555" font-family="Liberation Sans">10</text><text x="5" y="234" font-size="10" fill="#555" font-family="Liberation Sans">11</text><text x="5" y="307" font-size="10" fill="#555" font-family="Liberation Sans">12</text><text x="5" y="380" font-size="10" fill="#555" font-family="Liberation Sans">13</text><text x="5" y="453" font-size="10" fill="#555" font-family="Liberation Sans">14</text><rect x="0" y="0" width="783" height="20.5" fill="#dadada"/><line x1="44.5" y1="0" x2="44.5" y2="20.5" stroke="#333" stroke-width="1"/><text x="66.5" y="10" font-size="10" text-anchor="middle" fill="#333" font-family="Liberation Sans">3111</text><line x1="88.6" y1="0" x2="88.6" y2="20.5" stroke="#333" stroke-width="1"/><text x="110.6" y="10" font-size="10" text-anchor="middle" fill="#333" font-family="Liberation Sans">3112</text><line x1="132.7" y1="0" x2="132.7" y2="20.5" stroke="#333" stroke-width="1"/><text x="154.7" y="10" font-size="10" text-anchor="middle" fill="#333" font-family="Liberation Sans">3113</text><line x1="176.8" y1="0" x2="176.8" y2="20.5" stroke="#333" stroke-width="1"/><text x="198.8" y="10" font-size="10" text-anchor="middle" fill="#333" font-family="Liberation Sans">3114</text><line x1="220.9" y1="0" x2="220.9" y2="20.5" stroke="#333" stroke-width="1"/><text x="242.9" y="10" font-size="10" text-anchor="middle" fill="#333" font-family="Liberation Sans">3115</text><line x1="265.0" y1="0" x2="265.0" y2="20.5" stroke="#333" stroke-width="1"/><text x="287.0" y="10" font-size="10" text-anchor="middle" fill="#333" font-family="Liberation Sans">3116</text><line x1="309.1" y1="0" x2="309.1" y2="20.5" stroke="#333" stroke-width="1"/><text x="331.1" y="10" font-size="10" text-anchor="middle" fill="#333" font-family="Liberation Sans">3117</text><line x1="353.2" y1="0" x2="353.2" y2="20.5" stroke="#333" stroke-width="1"/><text x="375.2" y="10" font-size="10" text-anchor="middle" fill="#333" font-family="Liberation Sans">3118</text><line x1="397.3" y1="0" x2="397.3" y2="20.5" stroke="#333" stroke-width="1"/><text x="419.3" y="10" font-size="10" text-anchor="middle" fill="#333" font-family="Liberation Sans">3119</text><line x1="441.4" y1="0" x2="441.4" y2="20.5" stroke="#333" stroke-width="1"/><text x="463.4" y="10" font-size="10" text-anchor="middle" fill="#333" font-family="Liberation Sans">3120</text><line x1="485.5" y1="0" x2="485.5" y2="20.5" stroke="#333" stroke-width="1"/><text x="507.5" y="10" font-size="10" text-anchor="middle" fill="#333" font-family="Liberation Sans">3121</text><line x1="529.6" y1="0" x2="529.6" y2="20.5" stroke="#333" stroke-width="1"/><text x="551.6" y="10" font-size="10" text-anchor="middle" fill="#333" font-family="Liberation Sans">3122</text><line x1="573.7" y1="0" x2="573.7" y2="20.5" stroke="#333" stroke-width="1"/><text x="595.7" y="10" font-size="10" text-anchor="middle" fill="#333" font-family="Liberation Sans">3123</text><line x1="617.8" y1="0" x2="617.8" y2="20.5" stroke="#333" stroke-width="1"/><text x="639.8" y="10" font-size="10" text-anchor="middle" fill="#333" font-family="Liberation Sans">3124</text><line x1="661.9" y1="0" x2="661.9" y2="20.5" stroke="#333" stroke-width="1"/><text x="683.9" y="10" font-size="10" text-anchor="middle" fill="#333" font-family="Liberation Sans">3125</text><line x1="706.0" y1="0" x2="706.0" y2="20.5" stroke="#333" stroke-width="1"/><text x="728.0" y="10" font-size="10" text-anchor="middle" fill="#333" font-family="Liberation Sans">3126</text><line x1="750.1" y1="0" x2="750.1" y2="20.5" stroke="#333" stroke-width="1"/><text x="772.1" y="10" font-size="10" text-anchor="middle" fill="#333" font-family="Liberation Sans">3127</text></svg>
<div class="abs" style="left:783px;top:92px;width:17px;height:453px;background:#eeeeee;border-left:1px solid #8aa0c0"></div>
<div class="abs" style="left:784px;top:93px;width:15px;height:15px;border:1px solid #a8b8d0;background:linear-gradient(#fff,#e4ecf4)"><svg class="abs" style="left:2px;top:4px" width="10" height="6"><path d="M0,6 L10,6 L5,0 Z" fill="#222"/></svg></div>
<div class="abs" style="left:784px;top:231px;width:15px;height:80px;border:1px solid #8aa0c0;border-radius:2px;background:linear-gradient(90deg,#e6eef8,#fafcff 50%,#d0ddee)"><svg class="abs" style="left:3px;top:36px" width="9" height="6"><path d="M0,0.5 H9 M0,2.5 H9 M0,4.5 H9" stroke="#5870a8" stroke-width="0.8"/></svg></div>
<div class="abs" style="left:784px;top:528px;width:15px;height:16px;border:1px solid #a8b8d0;background:linear-gradient(#fff,#e4ecf4)"><svg class="abs" style="left:2px;top:5px" width="10" height="6"><path d="M0,0 L10,0 L5,6 Z" fill="#222"/></svg></div>
<div class="abs" style="left:0;top:545px;width:800px;height:16px;background:#eeeeee;border-top:1px solid #6f86a4;border-bottom:1px solid #6f86a4"></div>
<div class="abs" style="left:0;top:561px;width:800px;height:1px;background:#a0a0a0"></div>
<div class="abs" style="left:0;top:545px;width:16px;height:16px;border:1px solid #a8b8d0;background:linear-gradient(#fff,#e4ecf4)"><svg class="abs" style="left:4px;top:3px" width="6" height="10"><path d="M6,0 L6,10 L0,5 Z" fill="#222"/></svg></div>
<div class="abs" style="left:291px;top:545px;width:17px;height:16px;border:2px solid #5f84c8;background:linear-gradient(#dce8f6,#ffffff 35%,#c4d6ec)"><svg class="abs" style="left:3px;top:2px" width="8" height="10"><path d="M1.5,0 V10 M4.5,0 V10 M7.5,0 V10" stroke="#4a6cc0" stroke-width="1"/></svg></div>
<div class="abs" style="left:767px;top:545px;width:16px;height:16px;border:1px solid #a8b8d0;background:linear-gradient(#fff,#e4ecf4)"><svg class="abs" style="left:5px;top:3px" width="6" height="10"><path d="M0,0 L0,10 L6,5 Z" fill="#222"/></svg></div>
<div class="abs" style="left:0;top:0;width:5px;height:545px;background:linear-gradient(90deg,rgba(0,0,0,0.10),rgba(0,0,0,0))"></div>
</div>
<div class="win" style="left:380px;top:686px;width:740px;height:475px;background:#eeeeee">
  <div class="tb" style="height:37px;background:#ebebeb"><div class="abs" style="left:711px;top:7px;width:22px;height:22px;border-radius:11px;background:#dadada"></div><div class="tt" style="top:9px;font-size:16.4px;color:#333">BigDataViewer 5 - Parhyale_LimbDev_30tps</div><svg class="abs" style="left:717px;top:13px" width="10" height="10"><path d="M1,1 L9,9 M9,1 L1,9" stroke="#333" stroke-width="1.3"/></svg></div>
  <div class="mb" style="top:37px;height:21px"><span style="left:6px;top:3px">File</span><span style="left:39px;top:3px">View</span><span style="left:78px;top:3px">Edit</span><span style="left:111px;top:3px">Window</span><span style="left:168px;top:3px">Plugins</span></div>
  <svg class="abs" style="left:18px;top:66px" width="16" height="18"><path d="M4,8 L4,5 C4,1.5 12,1.5 12,5 L12,8" fill="none" stroke="#999" stroke-width="1.8"/><rect x="1.5" y="7.5" width="13" height="9" rx="1" fill="#f5c542" stroke="#d08a18"/><rect x="3" y="10" width="10" height="1" fill="#fff6c0"/><rect x="6" y="11" width="4" height="3" fill="#c47a10"/></svg><span class="t" style="left:38px;top:69px;font-size:11px;color:#333">1</span>
  <svg class="abs" style="left:78px;top:66px" width="16" height="18"><path d="M4,8 L4,4.5 C4,1 12,1 12,4.5 L12,6" fill="none" stroke="#999" stroke-width="1.8"/><rect x="1.5" y="7.5" width="13" height="9" rx="1" fill="#eaeaea" stroke="#9a9a9a"/><rect x="6" y="11" width="4" height="3" fill="#999"/><rect x="3" y="10" width="10" height="1" fill="#ccc"/></svg><span class="t" style="left:97px;top:69px;font-size:11px;color:#333">2</span>
  <svg class="abs" style="left:138px;top:66px" width="16" height="18"><path d="M4,8 L4,4.5 C4,1 12,1 12,4.5 L12,6" fill="none" stroke="#999" stroke-width="1.8"/><rect x="1.5" y="7.5" width="13" height="9" rx="1" fill="#eaeaea" stroke="#9a9a9a"/><rect x="6" y="11" width="4" height="3" fill="#999"/><rect x="3" y="10" width="10" height="1" fill="#ccc"/></svg><span class="t" style="left:157px;top:69px;font-size:11px;color:#333">3</span>
  <span class="t" style="left:180px;top:69px;font-size:11px;color:#333">timepoint: 11</span>
  <span class="t" style="left:254px;top:69px;font-size:11px;color:#333">spots: 3</span>
  <div class="abs" style="left:528px;top:68px;width:20px;height:20px;border-radius:4px;background:#555"><svg class="abs" style="left:0;top:0" width="20" height="20"><circle cx="11.5" cy="8.5" r="4.8" fill="none" stroke="#fff" stroke-width="2"/><path d="M8,12 L4,16" stroke="#fff" stroke-width="2.5" stroke-linecap="round"/></svg></div>
<div class="abs" style="left:567px;top:69px;width:122px;height:14px;background:#fff"><span class="t" style="left:1px;top:-1px;font-size:12px;font-style:italic;color:#b4c6e2">Search...</span></div>
<div class="abs" style="left:694px;top:71px;width:13px;height:13px;border:1px solid #8a9ab0;background:linear-gradient(#f4f7fb,#dde6f0)"></div>
<div class="t" style="left:711px;top:65px;font-size:9.5px;line-height:11.5px;color:#333;font-weight:bold">starts<br>with</div>
  <div class="abs" style="left:0;top:92px;width:740px;height:367px;background:#000;overflow:hidden"><svg width="740" height="367" style="position:absolute;left:0;top:0"><defs><filter id="b5" x="-50%" y="-50%" width="200%" height="200%"><feGaussianBlur in="SourceGraphic" stdDeviation="4" result="bl"/><feTurbulence type="fractalNoise" baseFrequency="0.35 0.04" numOctaves="1" seed="3" result="n"/><feColorMatrix in="n" type="matrix" values="0 0 0 0 1  0 0 0 0 1  0 0 0 0 1  1.2 0 0 0 0.2" result="nm"/><feComposite in="bl" in2="nm" operator="arithmetic" k1="0.9" k2="0.35" k3="0" k4="0"/></filter><filter id="b5g" x="-50%" y="-50%" width="200%" height="200%"><feGaussianBlur stdDeviation="18"/></filter><linearGradient id="vol" x1="0" x2="0" y1="0" y2="1"><stop offset="0" stop-color="#fff" stop-opacity="0.015"/><stop offset="0.55" stop-color="#fff" stop-opacity="0.06"/><stop offset="1" stop-color="#fff" stop-opacity="0"/></linearGradient></defs><rect width="740" height="367" fill="#000"/><path d="M63,0 L673,0 L663,219 L63,222 Z" fill="url(#vol)"/><g filter="url(#b5g)" fill="#fff"><ellipse cx="340" cy="197" rx="290" ry="42" fill-opacity="0.13"/></g><g filter="url(#b5)"><ellipse cx="85.0" cy="117.0" rx="15" ry="28" fill="#ffffff"/><ellipse cx="82.0" cy="92.0" rx="14" ry="20" fill="#c8c8c8"/><ellipse cx="124.6" cy="147.0" rx="15" ry="26" fill="#c8c8c8"/><ellipse cx="190.0" cy="177.0" rx="19" ry="30" fill="#ffffff"/><ellipse cx="227.5" cy="185.0" rx="17" ry="30" fill="#d7d7d7"/><ellipse cx="267.0" cy="207.0" rx="11" ry="18" fill="#afafaf"/><ellipse cx="308.7" cy="194.0" rx="14" ry="30" fill="#d7d7d7"/><ellipse cx="336.4" cy="204.0" rx="12" ry="24" fill="#bebebe"/><ellipse cx="374.0" cy="205.0" rx="17" ry="32" fill="#f5f5f5"/><ellipse cx="415.6" cy="194.0" rx="14" ry="26" fill="#c8c8c8"/><ellipse cx="453.0" cy="192.0" rx="12" ry="22" fill="#afafaf"/><ellipse cx="525.0" cy="182.0" rx="18" ry="36" fill="#d7d7d7"/><ellipse cx="522.0" cy="150.0" rx="16" ry="22" fill="#8c8c8c"/><ellipse cx="601.0" cy="190.0" rx="19" ry="24" fill="#ffffff"/><ellipse cx="599.0" cy="156.0" rx="20" ry="26" fill="#a5a5a5"/><ellipse cx="155.0" cy="167.0" rx="14" ry="20" fill="#787878"/></g><rect x="612" y="265" width="3" height="13" rx="1" fill="#fff"/><ellipse cx="613.5" cy="267" rx="4" ry="9" fill="#fff" fill-opacity="0.35"/><rect x="30.19999999999999" y="40.5" width="119.8" height="59.2" fill="#8a8a8a"/><defs><linearGradient id="colg" x1="0" x2="1"><stop offset="0" stop-color="#fff" stop-opacity="0.16"/><stop offset="1" stop-color="#fff" stop-opacity="0"/></linearGradient></defs><rect x="64" y="40.5" width="40" height="59.2" fill="url(#colg)"/><path d="M48.39999999999998,25.399999999999977 L134.39999999999998,27.5 L130.3,92.5 L45.30000000000001,90.39999999999998 Z" fill="none" stroke="#b070b0" stroke-width="1"/><path d="M30.19999999999999,10 L151.60000000000002,13.399999999999977 L145.79999999999995,103.20000000000005 L26.5,100.29999999999995 Z M30.19999999999999,10 L48.39999999999998,25.399999999999977 M151.60000000000002,13.399999999999977 L134.39999999999998,27.5 M145.79999999999995,103.20000000000005 L130.3,92.5 M26.5,100.29999999999995 L45.30000000000001,90.39999999999998" fill="none" stroke="#20e020" stroke-width="1.2"/><text x="41" y="19" font-size="10" fill="#fff" font-family="Liberation Sans">y</text><text x="90" y="26" font-size="10" fill="#fff" font-family="Liberation Sans">x</text><text x="46" y="57" font-size="10" fill="#fff" font-family="Liberation Sans">z</text><text x="367" y="12" font-size="10" fill="#fff" font-family="Liberation Mono">0</text><g fill="#16a816"><circle cx="67.2" cy="109.1" r="2.3"/><circle cx="75.1" cy="115.9" r="2.3"/><circle cx="92.9" cy="133.7" r="2.3"/><circle cx="85.0" cy="135.7" r="2.3"/><circle cx="113.5" cy="128.9" r="2.3"/><circle cx="122.6" cy="141.6" r="2.3"/><circle cx="126.6" cy="151.5" r="2.3"/><circle cx="150.3" cy="174.4" r="2.3"/><circle cx="156.3" cy="163.4" r="2.3"/><circle cx="160.2" cy="152.7" r="2.3"/><circle cx="159.4" cy="158.2" r="2.3"/><circle cx="171.3" cy="174.4" r="2.3"/><circle cx="184.0" cy="164.5" r="2.3"/><circle cx="195.9" cy="178.4" r="2.3"/><circle cx="195.9" cy="186.3" r="2.3"/><circle cx="207.7" cy="179.2" r="2.3"/><circle cx="211.7" cy="192.3" r="2.3"/><circle cx="219.6" cy="192.3" r="2.3"/><circle cx="232.3" cy="178.0" r="2.3"/><circle cx="235.4" cy="188.3" r="2.3"/><circle cx="239.4" cy="160.6" r="2.3"/><circle cx="240.2" cy="171.3" r="2.3"/><circle cx="254.4" cy="199.0" r="2.3"/><circle cx="257.2" cy="200.2" r="2.3"/><circle cx="260.4" cy="136.4" r="2.3"/><circle cx="269.1" cy="192.3" r="2.3"/><circle cx="271.1" cy="195.0" r="2.3"/><circle cx="273.1" cy="179.2" r="2.3"/><circle cx="283.0" cy="180.4" r="2.3"/><circle cx="291.7" cy="192.3" r="2.3"/><circle cx="294.8" cy="189.1" r="2.3"/><circle cx="298.0" cy="208.9" r="2.3"/><circle cx="304.7" cy="210.9" r="2.3"/><circle cx="323.3" cy="208.1" r="2.3"/><circle cx="329.3" cy="139.6" r="2.3"/><circle cx="329.3" cy="150.3" r="2.3"/><circle cx="338.4" cy="200.2" r="2.3"/><circle cx="348.3" cy="186.3" r="2.3"/><circle cx="369.3" cy="192.3" r="2.3"/><circle cx="376.0" cy="204.9" r="2.3"/><circle cx="370.0" cy="214.8" r="2.3"/><circle cx="415.6" cy="198.2" r="2.3"/><circle cx="417.6" cy="208.1" r="2.3"/><circle cx="441.3" cy="192.3" r="2.3"/><circle cx="445.3" cy="197.0" r="2.3"/><circle cx="451.2" cy="196.2" r="2.3"/><circle cx="465.1" cy="197.0" r="2.3"/><circle cx="472.2" cy="192.3" r="2.3"/><circle cx="494.8" cy="190.3" r="2.3"/><circle cx="513.8" cy="186.3" r="2.3"/><circle cx="525.2" cy="168.5" r="2.3"/><circle cx="528.4" cy="176.4" r="2.3"/><circle cx="530.4" cy="192.3" r="2.3"/><circle cx="545.4" cy="176.4" r="2.3"/><circle cx="553.3" cy="181.2" r="2.3"/><circle cx="563.2" cy="185.1" r="2.3"/><circle cx="573.9" cy="169.3" r="2.3"/><circle cx="575.9" cy="166.1" r="2.3"/><circle cx="607.6" cy="141.6" r="2.3"/><circle cx="607.6" cy="165.3" r="2.3"/><circle cx="640.4" cy="161.4" r="2.3"/><circle cx="641.2" cy="169.3" r="2.3"/><circle cx="649.1" cy="158.6" r="2.3"/><circle cx="653.9" cy="151.5" r="2.3"/><circle cx="654.3" cy="115.9" r="2.3"/><circle cx="62.1" cy="316.6" r="2.3"/><circle cx="366.1" cy="323.3" r="2.3"/><circle cx="526.4" cy="292.4" r="2.3"/><circle cx="562.1" cy="335.6" r="2.3"/><circle cx="633.3" cy="321.3" r="2.3"/></g><g fill="none" stroke="#22e622" stroke-width="1.3"><circle cx="85" cy="120" r="10"/><circle cx="125" cy="149" r="12"/><circle cx="189" cy="182" r="14"/><circle cx="227" cy="190" r="13"/><circle cx="268" cy="211" r="9"/><circle cx="309" cy="199" r="11"/><circle cx="337" cy="209" r="8"/><circle cx="373" cy="212" r="15"/><circle cx="371" cy="211" r="12"/><circle cx="416" cy="199" r="13"/><circle cx="453" cy="197" r="9"/><circle cx="522" cy="189" r="14"/><circle cx="602" cy="187" r="14"/><circle cx="613" cy="272" r="14"/></g><path d="M366,218 L382,206 L398,198 M416,207 L442,210" fill="none" stroke="#70a020" stroke-width="1"/><text x="723" y="11" font-size="10" fill="#fff" font-family="Liberation Mono" text-anchor="end">t = 11</text><text x="723" y="25" font-size="10" fill="#fff" font-family="Liberation Mono" text-anchor="end" xml:space="preserve">1086.1,  903.9,  809.5</text></svg></div>
  <div class="abs" style="left:0;top:474px;width:740px;height:1px;background:#a8a8a8"></div>
  <div class="abs" style="left:7px;top:464px;width:275px;height:6px;border:1px solid #6a88c8;border-right:none;background:linear-gradient(#fafcff,#c4d6ec)"></div>
  <div class="abs" style="left:282px;top:464px;width:451px;height:6px;border:1px solid #7890a8;border-left:none;background:#eeeeee"></div>
  <svg class="abs" style="left:274px;top:459px" width="17" height="17"><defs><linearGradient id="thg" x1="0" x2="0" y1="0" y2="1"><stop offset="0" stop-color="#dce8f6"/><stop offset="0.35" stop-color="#ffffff"/><stop offset="1" stop-color="#bcd2ec"/></linearGradient></defs><path d="M1.5,1 L15.5,1 L15.5,9 L8.5,16 L1.5,9 Z" fill="url(#thg)" stroke="#333" stroke-width="1"/></svg>
</div>
<div class="win" style="left:1120px;top:686px;width:800px;height:477px;background:#fafafa">
<div class="tb" style="height:36px;border-bottom:1px solid #dcdcdc;background:linear-gradient(#dedede,#f6f6f6 10px,#fafafa 16px)"><div class="tt" style="top:8px;font-size:16.4px;color:#555">Protocol_Auto-Detection_Auto-Linking.docx — LibreOffice Writer</div><svg class="abs" style="left:777px;top:13px" width="10" height="10"><path d="M1,1 L9,9 M9,1 L1,9" stroke="#333" stroke-width="1.3"/></svg></div>
<div class="abs" style="left:0;top:37px;width:800px;height:28px;background:#fafafa"><span class="t" style="left:8.7px;top:6px;font-size:14.8px;color:#4a4a4a">File</span><span class="t" style="left:50.3px;top:6px;font-size:14.8px;color:#4a4a4a">Edit</span><span class="t" style="left:95.6px;top:6px;font-size:14.8px;color:#4a4a4a">View</span><span class="t" style="left:148.4px;top:6px;font-size:14.8px;color:#4a4a4a">Insert</span><span class="t" style="left:205.5px;top:6px;font-size:14.8px;color:#4a4a4a">Format</span><span class="t" style="left:274.5px;top:6px;font-size:14.8px;color:#4a4a4a">Styles</span><span class="t" style="left:336.8px;top:6px;font-size:14.8px;color:#4a4a4a">Table</span><span class="t" style="left:393px;top:6px;font-size:14.8px;color:#4a4a4a">Form</span><span class="t" style="left:448.8px;top:6px;font-size:14.8px;color:#4a4a4a">Tools</span><span class="t" style="left:505.8px;top:6px;font-size:14.8px;color:#4a4a4a">Window</span><span class="t" style="left:582.3px;top:6px;font-size:14.8px;color:#4a4a4a">Help</span><svg class="abs" style="left:779px;top:10px" width="10" height="10"><path d="M1,1 L9,9 M9,1 L1,9" stroke="#444" stroke-width="1.2"/></svg></div>
<div class="abs" style="left:0;top:64px;width:762px;height:1px;background:#dedede"></div>
<svg class="abs" style="left:0;top:0" width="800" height="110"><path d="M10,80 L14,76 M10,80 L14,84 M10,80 L22,80 C27,80 28,86 23,90" fill="none" stroke="#a8a8a8" stroke-width="1.8" stroke-linecap="round"/><path d="M38,84 L45,84 L41.5,88 Z" fill="#bbb"/><rect x="54" y="74" width="18" height="20" rx="2.5" fill="none" stroke="#222" stroke-width="2"/><rect x="59" y="72" width="8" height="4" rx="1" fill="#222"/><path d="M82,84 L89,84 L85.5,88 Z" fill="#111"/><rect x="96" y="68" width="1" height="33" fill="#ddd"/><path d="M115,74 L115,80 L110,83 L110,92 C110,93 108,94 108,94 L124,94 L124,83 L119,80 L119,74 Z" fill="none" stroke="#222" stroke-width="1.6"/><rect x="110" y="88" width="14" height="6" fill="#2a2a2a"/><path d="M142,93 L148,74 L152,74 L156,85 M145,85 L153,85" fill="none" stroke="#2a2a2a" stroke-width="1.8"/><rect x="150" y="83" width="11" height="8" rx="1.5" transform="rotate(-40 155.5 87)" fill="#fafafa" stroke="#2a2a2a" stroke-width="1.6"/><path d="M152,91 L158,85" stroke="#2a2a2a" stroke-width="1.2"/><rect x="170" y="68" width="1" height="33" fill="#ddd"/><rect x="764" y="68" width="1" height="33" fill="#ddd"/><path d="M787,79 L791,83 L787,87 M791,79 L795,83 L791,87" fill="none" stroke="#222" stroke-width="1.7"/></svg>
<div class="abs" style="left:174px;top:68px;width:222px;height:33px;border:1px solid #d2d2d2;border-radius:6px;background:#fdfdfd"><span class="t" style="left:8px;top:7px;font-size:15.5px;color:#333;">Default Paragraph Styl</span><div class="abs" style="left:180px;top:0;width:1px;height:31px;background:#d8d8d8"></div><svg class="abs" style="left:192px;top:12px" width="12" height="8"><path d="M1,1.5 L6,6 L11,1.5" fill="none" stroke="#444" stroke-width="1.3"/></svg></div>
<div class="abs" style="left:353px;top:69px;width:1px;height:31px;background:#e4e4e4"></div>
<div class="abs" style="left:405px;top:68px;width:243px;height:33px;border:1px solid #d2d2d2;border-radius:6px;background:#fdfdfd"><span class="t" style="left:8px;top:7px;font-size:15.5px;color:#333;font-style:italic">Aptos</span><div class="abs" style="left:208px;top:0;width:1px;height:31px;background:#d8d8d8"></div><svg class="abs" style="left:220px;top:12px" width="12" height="8"><path d="M1,1.5 L6,6 L11,1.5" fill="none" stroke="#444" stroke-width="1.3"/></svg></div>
<div class="abs" style="left:658px;top:68px;width:102px;height:33px;border:1px solid #d2d2d2;border-radius:6px;background:#fdfdfd"><span class="t" style="left:8px;top:7px;font-size:15.5px;color:#333;">12 pt</span><div class="abs" style="left:66px;top:0;width:1px;height:31px;background:#d8d8d8"></div><svg class="abs" style="left:78px;top:12px" width="12" height="8"><path d="M1,1.5 L6,6 L11,1.5" fill="none" stroke="#444" stroke-width="1.3"/></svg></div>
<svg class="abs" style="left:0;top:104px" width="800" height="25"><rect x="0" y="0" width="800" height="25" fill="#fafafa"/><path d="M22,4.5 H96.5 V20.5 H22 M693,4.5 H782 M693,20.5 H782 M693,4.5 V20.5" fill="none" stroke="#c8c8c8" stroke-width="1"/><path d="M9,10 V15.5 H16" fill="none" stroke="#777" stroke-width="1.6"/><path d="M86,4.5 H97 L91.5,12.5 Z M86,20.5 H97 L91.5,12.5 Z" fill="#fff" stroke="#999" stroke-width="1"/><path d="M693,20.5 L698,14 L703,20.5 Z" fill="#fff" stroke="#999"/><line x1="34.8" y1="9" x2="34.8" y2="15" stroke="#999" stroke-width="1"/><line x1="72.6" y1="9" x2="72.6" y2="15" stroke="#999" stroke-width="1"/><text x="53.7" y="16" font-size="10" text-anchor="middle" fill="#8a8a8a" font-family="Liberation Sans">1</text><line x1="110.4" y1="9" x2="110.4" y2="15" stroke="#999" stroke-width="1"/><line x1="148.2" y1="9" x2="148.2" y2="15" stroke="#999" stroke-width="1"/><text x="129.3" y="16" font-size="10" text-anchor="middle" fill="#8a8a8a" font-family="Liberation Sans">1</text><line x1="186.0" y1="9" x2="186.0" y2="15" stroke="#999" stroke-width="1"/><text x="167.1" y="16" font-size="10" text-anchor="middle" fill="#8a8a8a" font-family="Liberation Sans">2</text><line x1="223.8" y1="9" x2="223.8" y2="15" stroke="#999" stroke-width="1"/><text x="204.9" y="16" font-size="10" text-anchor="middle" fill="#8a8a8a" font-family="Liberation Sans">3</text><line x1="261.6" y1="9" x2="261.6" y2="15" stroke="#999" stroke-width="1"/><text x="242.7" y="16" font-size="10" text-anchor="middle" fill="#8a8a8a" font-family="Liberation Sans">4</text><line x1="299.4" y1="9" x2="299.4" y2="15" stroke="#999" stroke-width="1"/><text x="280.5" y="16" font-size="10" text-anchor="middle" fill="#8a8a8a" font-family="Liberation Sans">5</text><line x1="337.2" y1="9" x2="337.2" y2="15" stroke="#999" stroke-width="1"/><text x="318.3" y="16" font-size="10" text-anchor="middle" fill="#8a8a8a" font-family="Liberation Sans">6</text><line x1="375.0" y1="9" x2="375.0" y2="15" stroke="#999" stroke-width="1"/><text x="356.1" y="16" font-size="10" text-anchor="middle" fill="#8a8a8a" font-family="Liberation Sans">7</text><line x1="412.8" y1="9" x2="412.8" y2="15" stroke="#999" stroke-width="1"/><text x="393.9" y="16" font-size="10" text-anchor="middle" fill="#8a8a8a" font-family="Liberation Sans">8</text><line x1="450.6" y1="9" x2="450.6" y2="15" stroke="#999" stroke-width="1"/><text x="431.7" y="16" font-size="10" text-anchor="middle" fill="#8a8a8a" font-family="Liberation Sans">9</text><line x1="488.4" y1="9" x2="488.4" y2="15" stroke="#999" stroke-width="1"/><text x="469.5" y="16" font-size="10" text-anchor="middle" fill="#8a8a8a" font-family="Liberation Sans">10</text><line x1="526.2" y1="9" x2="526.2" y2="15" stroke="#999" stroke-width="1"/><text x="507.3" y="16" font-size="10" text-anchor="middle" fill="#8a8a8a" font-family="Liberation Sans">11</text><line x1="564.0" y1="9" x2="564.0" y2="15" stroke="#999" stroke-width="1"/><text x="545.1" y="16" font-size="10" text-anchor="middle" fill="#8a8a8a" font-family="Liberation Sans">12</text><line x1="601.8" y1="9" x2="601.8" y2="15" stroke="#999" stroke-width="1"/><text x="582.9" y="16" font-size="10" text-anchor="middle" fill="#8a8a8a" font-family="Liberation Sans">13</text><line x1="639.6" y1="9" x2="639.6" y2="15" stroke="#999" stroke-width="1"/><text x="620.7" y="16" font-size="10" text-anchor="middle" fill="#8a8a8a" font-family="Liberation Sans">14</text><line x1="677.4" y1="9" x2="677.4" y2="15" stroke="#999" stroke-width="1"/><text x="658.5" y="16" font-size="10" text-anchor="middle" fill="#8a8a8a" font-family="Liberation Sans">15</text><line x1="715.2" y1="9" x2="715.2" y2="15" stroke="#999" stroke-width="1"/><text x="696.3" y="16" font-size="10" text-anchor="middle" fill="#8a8a8a" font-family="Liberation Sans">16</text><line x1="753.0" y1="9" x2="753.0" y2="15" stroke="#999" stroke-width="1"/><text x="734.1" y="16" font-size="10" text-anchor="middle" fill="#8a8a8a" font-family="Liberation Sans">17</text><text x="771.9" y="16" font-size="10" text-anchor="middle" fill="#8a8a8a" font-family="Liberation Sans">18</text><path d="M136.5,20 H142.5 M139.5,16 V20" stroke="#888" stroke-width="1" fill="none"/><path d="M184.5,20 H190.5 M187.5,16 V20" stroke="#888" stroke-width="1" fill="none"/><path d="M232.5,20 H238.5 M235.5,16 V20" stroke="#888" stroke-width="1" fill="none"/><path d="M280.5,20 H286.5 M283.5,16 V20" stroke="#888" stroke-width="1" fill="none"/><path d="M328.5,20 H334.5 M331.5,16 V20" stroke="#888" stroke-width="1" fill="none"/><path d="M376.5,20 H382.5 M379.5,16 V20" stroke="#888" stroke-width="1" fill="none"/><path d="M424.5,20 H430.5 M427.5,16 V20" stroke="#888" stroke-width="1" fill="none"/><path d="M472.5,20 H478.5 M475.5,16 V20" stroke="#888" stroke-width="1" fill="none"/><path d="M520.5,20 H526.5 M523.5,16 V20" stroke="#888" stroke-width="1" fill="none"/><path d="M568.5,20 H574.5 M571.5,16 V20" stroke="#888" stroke-width="1" fill="none"/><path d="M616.5,20 H622.5 M619.5,16 V20" stroke="#888" stroke-width="1" fill="none"/><path d="M664.5,20 H670.5 M667.5,16 V20" stroke="#888" stroke-width="1" fill="none"/></svg>
<svg class="abs" style="left:0;top:129px;overflow:hidden" width="783" height="312"><rect x="0" y="0" width="783" height="318" fill="#ffffff"/><circle cx="216.0" cy="8.5" r="2.6" fill="none" stroke="#555" stroke-width="1"/><text x="236.0" y="11.4" font-size="15" fill="#111" font-family="Liberation Sans" textLength="441.6" lengthAdjust="spacingAndGlyphs">Again use the Advanced DoG Detector but with slightly</text><text x="236.0" y="33.3" font-size="15" fill="#111" font-family="Liberation Sans" textLength="364.9" lengthAdjust="spacingAndGlyphs">different parameters to detect smaller nuclei:</text><circle cx="264.0" cy="52.0" r="2.6" fill="none" stroke="#555" stroke-width="1"/><text x="284.3" y="55.2" font-size="15" fill="#111" font-family="Liberation Sans" textLength="159.3" lengthAdjust="spacingAndGlyphs">Detect: Bright blobs</text><circle cx="264.0" cy="74.0" r="2.6" fill="none" stroke="#555" stroke-width="1"/><text x="284.3" y="76.6" font-size="15" fill="#111" font-family="Liberation Sans" textLength="164.0" lengthAdjust="spacingAndGlyphs">Estimated diameter: </text><text x="452.9" y="76.6" font-size="15" fill="#ee0000" font-family="Liberation Sans" textLength="44" lengthAdjust="spacingAndGlyphs">30 px</text><circle cx="264.0" cy="95.5" r="2.6" fill="none" stroke="#555" stroke-width="1"/><text x="284.3" y="98.0" font-size="15" fill="#111" font-family="Liberation Sans" textLength="192.9" lengthAdjust="spacingAndGlyphs">Quality threshold: 100.0</text><circle cx="264.0" cy="117.5" r="2.6" fill="none" stroke="#555" stroke-width="1"/><text x="284.3" y="120.0" font-size="15" fill="#111" font-family="Liberation Sans" textLength="88.0" lengthAdjust="spacingAndGlyphs">Behaviour: </text><text x="375.7" y="120.0" font-size="15" fill="#ee0000" font-family="Liberation Sans" textLength="78.3" lengthAdjust="spacingAndGlyphs">Don’t Add</text><text x="140.0" y="141.9" font-size="15" fill="#111" font-family="Liberation Sans" textLength="528.8" lengthAdjust="spacingAndGlyphs">Press ‘Finish’ and inspect the automatic tracking result in the BDV</text><text x="140.0" y="163.8" font-size="15" fill="#111" font-family="Liberation Sans" textLength="219.8" lengthAdjust="spacingAndGlyphs">and TrackScheme windows.</text><text x="116.6" y="197.0" font-size="15" fill="#111" font-family="Liberation Sans" textLength="15.0" lengthAdjust="spacingAndGlyphs">2.</text><text x="140.0" y="197.0" font-size="15" fill="#111" font-family="Liberation Sans" font-weight="bold" textLength="270.0" lengthAdjust="spacingAndGlyphs">Remove Bad Threshold Spots:</text><circle cx="167" cy="225" r="2.2" fill="#111"/><text x="188.3" y="228.5" font-size="15" fill="#111" font-family="Liberation Sans" textLength="243.6" lengthAdjust="spacingAndGlyphs">Use Mastodon's Table Window:</text><circle cx="216.0" cy="258.0" r="2.6" fill="none" stroke="#555" stroke-width="1"/><text x="236.0" y="260.4" font-size="15" fill="#111" font-family="Liberation Sans" textLength="402.6" lengthAdjust="spacingAndGlyphs">Go to the Mastodon main window, click the ‘Table’</text><text x="236.0" y="282.6" font-size="15" fill="#111" font-family="Liberation Sans" textLength="368.2" lengthAdjust="spacingAndGlyphs">button, and then select ‘Spot’ on the left side.</text><circle cx="216.0" cy="312.0" r="2.6" fill="none" stroke="#555" stroke-width="1"/><text x="236.0" y="314.5" font-size="15" fill="#111" font-family="Liberation Sans" textLength="401.8" lengthAdjust="spacingAndGlyphs">In the Table click on the column named ‘Detection</text></svg>
<div class="abs" style="left:0;top:441px;width:800px;height:13px;background:#fafafa"><div class="abs" style="left:33px;top:4px;width:724px;height:5px;border-radius:2.5px;background:#c4c4c4"></div></div>
<div class="abs" style="left:780px;top:105px;width:12px;height:336px;background:#f0f0f0"></div><div class="abs" style="left:792px;top:105px;width:1px;height:336px;background:#c4c4c4"></div><div class="abs" style="left:793px;top:105px;width:7px;height:336px;background:#fafafa"></div>
<div class="abs" style="left:783px;top:170px;width:6px;height:40px;border-radius:3px;background:#c4c4c4"></div>
<div class="abs" style="left:792px;top:241px;width:8px;height:73px;background:#a6a6a6"><svg class="abs" style="left:2px;top:34px" width="5" height="8"><path d="M5,0 L5,8 L0,4 Z" fill="#fff"/></svg></div>
<svg class="abs" style="left:0;top:454px" width="800" height="30"><rect x="0" y="0" width="800" height="30" fill="#f8f8f8"/><rect x="0" y="0" width="800" height="1" fill="#dadada"/><path d="M12.5,5.5 H22 L25,8.5 V17.5 C25,18 24.5,18.5 24,18.5 H13.5 C13,18.5 12.5,18 12.5,17.5 Z" fill="none" stroke="#9a9a9a" stroke-width="1.3"/><rect x="15.5" y="5.5" width="6" height="4" fill="none" stroke="#9a9a9a" stroke-width="1"/><rect x="15.5" y="12.5" width="4" height="6" fill="#9a9a9a"/><rect x="30.6" y="3" width="1" height="17" fill="#d4d4d4"/><rect x="160.6" y="3" width="1" height="17" fill="#d4d4d4"/><rect x="353.5" y="3" width="1" height="17" fill="#d4d4d4"/><rect x="399.6" y="3" width="1" height="17" fill="#d4d4d4"/><rect x="527.5" y="3" width="1" height="17" fill="#d4d4d4"/><rect x="615.6" y="3" width="1" height="17" fill="#d4d4d4"/><rect x="759" y="3" width="1" height="17" fill="#d4d4d4"/><text x="41" y="18" font-size="13" fill="#333" font-family="Liberation Sans" textLength="68.5" lengthAdjust="spacingAndGlyphs">Page 1 of 3</text><text x="170.3" y="18" font-size="13" fill="#333" font-family="Liberation Sans" textLength="178.2" lengthAdjust="spacingAndGlyphs">595 words, 3,494 characters</text><text x="409.3" y="18" font-size="13" fill="#333" font-family="Liberation Sans" textLength="112.7" lengthAdjust="spacingAndGlyphs">Default Page Style</text><path d="M540,5 H547 L550,8 V19 H540 Z" fill="none" stroke="#222" stroke-width="1.5"/><path d="M557,6 H566 V19 H557 Z M568,6 H577 V19 H568 Z" fill="none" stroke="#999" stroke-width="1.2"/><path d="M590,6 H599 V19 H590 Z M601,6 H610 V19 H601 Z" fill="none" stroke="#999" stroke-width="1.2"/><path d="M624,12.5 H634" stroke="#222" stroke-width="1.5"/><path d="M643,13 H737" stroke="#999" stroke-width="1"/><circle cx="687.7" cy="13" r="5" fill="#222"/><path d="M743,12.5 H753 M748,7.5 V17.5" stroke="#222" stroke-width="1.5"/><text x="765.6" y="18" font-size="13" fill="#333" font-family="Liberation Sans" textLength="33" lengthAdjust="spacingAndGlyphs">100%</text></svg>
<div class="abs" style="left:0;top:0;width:6px;height:477px;background:linear-gradient(90deg,rgba(0,0,0,0.13),rgba(0,0,0,0))"></div>
</div>
</body></html>
